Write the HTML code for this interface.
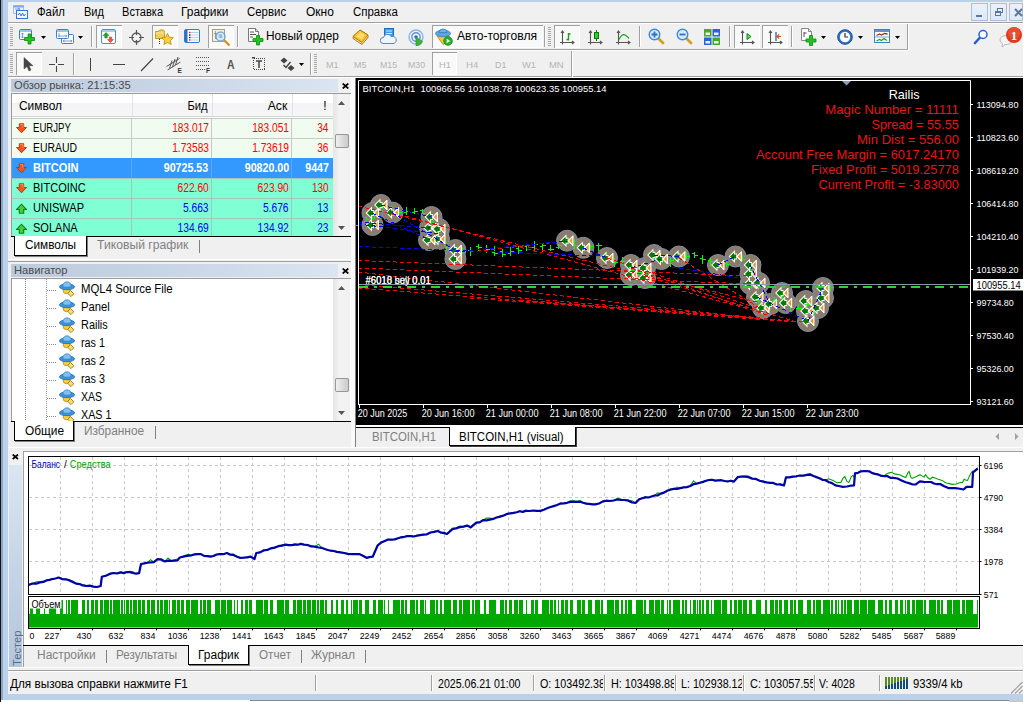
<!DOCTYPE html>
<html><head><meta charset="utf-8"><title>MetaTrader 4</title>
<style>
html,body{margin:0;padding:0;background:#fff;}
body{width:1036px;height:702px;position:relative;overflow:hidden;font-family:"Liberation Sans",sans-serif;}
.r{position:absolute;display:block;}
.t{position:absolute;white-space:nowrap;transform-origin:0 0;}
svg text{white-space:pre;}
</style></head><body>
<div class="r" style="left:0px;top:0px;width:1036px;height:702px;background:#fff;"></div>
<div class="r" style="left:0px;top:0px;width:1023px;height:700px;background:#b9d1ea;"></div>
<div class="r" style="left:0px;top:0px;width:1px;height:702px;background:#111;"></div>
<div class="r" style="left:1px;top:0px;width:2px;height:700px;background:#8fa6c4;"></div>
<div class="r" style="left:8px;top:2px;width:1015px;height:692px;background:#f0f0f0;"></div>
<div class="r" style="left:250px;top:700px;width:760px;height:1px;background:#8a8a8a;"></div>
<div class="r" style="left:1009px;top:700px;width:14px;height:2px;background:#c8c8c8;"></div>
<div class="r" style="left:8px;top:22px;width:1015px;height:1px;background:#a0a0a0;"></div>
<div class="r" style="left:8px;top:23px;width:1015px;height:1px;background:#fff;"></div>
<svg class="r" style="left:13px;top:4px" width="16" height="16" viewBox="0 0 16 16"><rect x="0.5" y="1.5" width="10" height="8" fill="#eaf2ff" stroke="#5a8be0" stroke-dasharray="1 1"/>
<rect x="0.5" y="1.5" width="10" height="2" fill="#7aa7ee"/>
<rect x="3.5" y="6.5" width="11" height="8" fill="#f4f8ff" stroke="#3a70d8"/>
<path d="M5 11l1.5-2 1.5 3 1.5-3 1.5 3 1.5-2" stroke="#3a70d8" fill="none" stroke-width="1"/>
<path d="M2 5h5M5 4l2 1-2 1" stroke="#5a8be0" fill="none" stroke-width="0.8"/></svg>
<span class="t" style="top:6.00px;font:12.5px/1 'Liberation Sans',sans-serif;color:#000;left:36.90px;transform:scaleX(0.9046);">Файл</span>
<span class="t" style="top:6.00px;font:12.5px/1 'Liberation Sans',sans-serif;color:#000;left:83.60px;transform:scaleX(0.8844);">Вид</span>
<span class="t" style="top:6.00px;font:12.5px/1 'Liberation Sans',sans-serif;color:#000;left:121.50px;transform:scaleX(0.8847);">Вставка</span>
<span class="t" style="top:6.00px;font:12.5px/1 'Liberation Sans',sans-serif;color:#000;left:181.20px;transform:scaleX(0.9539);">Графики</span>
<span class="t" style="top:6.00px;font:12.5px/1 'Liberation Sans',sans-serif;color:#000;left:247.20px;transform:scaleX(0.9135);">Сервис</span>
<span class="t" style="top:6.00px;font:12.5px/1 'Liberation Sans',sans-serif;color:#000;left:305.60px;transform:scaleX(0.9606);">Окно</span>
<span class="t" style="top:6.00px;font:12.5px/1 'Liberation Sans',sans-serif;color:#000;left:352.60px;transform:scaleX(0.9157);">Справка</span>
<div class="r" style="left:971px;top:3px;width:17px;height:18px;background:linear-gradient(#eaf1fb,#dce8f7);box-shadow:inset 0 0 0 1px #a9bfdc;"></div>
<div class="r" style="left:990px;top:3px;width:17px;height:18px;background:linear-gradient(#eaf1fb,#dce8f7);box-shadow:inset 0 0 0 1px #a9bfdc;"></div>
<div class="r" style="left:1009px;top:3px;width:14px;height:18px;background:linear-gradient(#eaf1fb,#dce8f7);box-shadow:inset 0 0 0 1px #a9bfdc;"></div>
<div class="r" style="left:976px;top:15px;width:6px;height:2px;background:#5d7797;"></div>
<svg class="r" style="left:994px;top:7px" width="10" height="10" viewBox="0 0 10 10"><rect x="3.5" y="1.5" width="5" height="4" fill="none" stroke="#5d7797" stroke-width="1"/><rect x="1.5" y="4.5" width="5" height="4" fill="#e3edf9" stroke="#5d7797" stroke-width="1"/><rect x="1" y="4" width="6" height="2" fill="#5d7797"/></svg>
<svg class="r" style="left:1014px;top:8px" width="9" height="9" viewBox="0 0 9 9"><path d="M1 1L8 8M8 1L1 8" stroke="#5d7797" stroke-width="2"/></svg>
<div class="r" style="left:8px;top:49px;width:900px;height:1px;background:#a0a0a0;"></div>
<div class="r" style="left:8px;top:50px;width:900px;height:1px;background:#fff;"></div>
<div class="r" style="left:907px;top:24px;width:1px;height:26px;background:#a0a0a0;"></div>
<div class="r" style="left:908px;top:24px;width:1px;height:27px;background:#fff;"></div>
<div class="r" style="left:10px;top:27px;width:3px;height:1px;background:#a8a8a8;"></div><div class="r" style="left:10px;top:29px;width:3px;height:1px;background:#a8a8a8;"></div><div class="r" style="left:10px;top:31px;width:3px;height:1px;background:#a8a8a8;"></div><div class="r" style="left:10px;top:33px;width:3px;height:1px;background:#a8a8a8;"></div><div class="r" style="left:10px;top:35px;width:3px;height:1px;background:#a8a8a8;"></div><div class="r" style="left:10px;top:37px;width:3px;height:1px;background:#a8a8a8;"></div><div class="r" style="left:10px;top:39px;width:3px;height:1px;background:#a8a8a8;"></div><div class="r" style="left:10px;top:41px;width:3px;height:1px;background:#a8a8a8;"></div><div class="r" style="left:10px;top:43px;width:3px;height:1px;background:#a8a8a8;"></div><div class="r" style="left:10px;top:45px;width:3px;height:1px;background:#a8a8a8;"></div>
<svg class="r" style="left:19px;top:28px" width="18" height="18" viewBox="0 0 18 18"><rect x="0.5" y="1.5" width="12" height="10" rx="1" fill="#fff" stroke="#3b7fc4"/><rect x="1" y="2" width="11" height="2" fill="#9cc3ea"/>
<path d="M3.5 5v5M2 6.5l1.500-1.500 1.500 1.500M2 8.500l1.500 1.500 1.500-1.500" stroke="#7a9cc0" fill="none"/>
<path d="M9 6h3v3.500h3.500v3h-3.500v3.500h-3v-3.500h-3.500v-3h3.500z" fill="#22c322" stroke="#0a8a0a" stroke-width="0.8"/></svg>
<svg class="r" style="left:41px;top:36px" width="5" height="3" viewBox="0 0 5 3"><path d="M0 0H5L2.5 3Z" fill="#000"/></svg>
<svg class="r" style="left:56px;top:28px" width="18" height="18" viewBox="0 0 18 18"><rect x="5.500" y="6.500" width="12" height="9" rx="1" fill="#fff" stroke="#3b7fc4"/>
<rect x="0.5" y="1.500" width="12" height="9" rx="1" fill="#fff" stroke="#3b7fc4"/><rect x="1" y="2" width="11" height="2" fill="#9cc3ea"/>
<path d="M3 5v4M2 8h9M9.500 7l1.500 1-1.500 1M7 13h9M14.500 12l1.500 1-1.500 1M8.500 12l-1.500 1 1.500 1" stroke="#6d93bd" fill="none" stroke-width="0.9"/></svg>
<svg class="r" style="left:78px;top:36px" width="5" height="3" viewBox="0 0 5 3"><path d="M0 0H5L2.5 3Z" fill="#000"/></svg>
<div class="r" style="left:91px;top:26px;width:1px;height:21px;background:#a0a0a0;"></div><div class="r" style="left:92px;top:26px;width:1px;height:21px;background:#fff;"></div>
<div class="r" style="left:96px;top:25px;width:26px;height:23px;background:#f9f9f9;box-shadow:inset 1px 1px 0 #a0a0a0,inset -1px -1px 0 #fff;"></div>
<svg class="r" style="left:101px;top:29px" width="16" height="16" viewBox="0 0 16 16"><rect x="0.5" y="0.5" width="14" height="14" rx="1.500" fill="#fff" stroke="#4a90d9"/><rect x="1" y="1" width="13" height="2" fill="#a8cdf0"/>
<path d="M5 3.500l3 3h-1.800v2.500h-2.400v-2.500h-1.800z" fill="#1fa81f" stroke="#0b7a0b" stroke-width="0.5"/>
<path d="M9.500 13.500l3-3h-1.800v-2.500h-2.400v2.500h-1.800z" fill="#f0582a" stroke="#c03a10" stroke-width="0.5"/></svg>
<svg class="r" style="left:129px;top:30px" width="15" height="15" viewBox="0 0 15 15"><circle cx="7.500" cy="7.500" r="4.500" fill="none" stroke="#555" stroke-width="1.300"/><path d="M7.500 0v5M7.500 10v5M0 7.500h5M10 7.500h5" stroke="#555" stroke-width="1.200"/></svg>
<div class="r" style="left:152px;top:25px;width:26px;height:23px;background:#f9f9f9;box-shadow:inset 1px 1px 0 #a0a0a0,inset -1px -1px 0 #fff;"></div>
<svg class="r" style="left:155px;top:28px" width="19" height="18" viewBox="0 0 19 18"><path d="M0.500 3.500h3l1-1.500h4l1 1.500v7h-9z" fill="#f3cf5a" stroke="#c79a1c"/><path d="M0.500 5h9" stroke="#fbe9a0"/>
<path d="M4.500 11v6" stroke="#333" stroke-dasharray="1 1"/>
<path d="M12.500 5.500l1.800 3.700 4 .5-3 2.800.8 4-3.600-2-3.600 2 .8-4-3-2.800 4-.5z" fill="#f7d23c" stroke="#c28e10" stroke-width="0.9"/></svg>
<svg class="r" style="left:184px;top:29px" width="17" height="15" viewBox="0 0 17 15"><rect x="0.5" y="0.5" width="15" height="13" rx="1.500" fill="#fff" stroke="#2f7bd0"/><rect x="1" y="1" width="2.500" height="12" fill="#2f6fc8"/>
<path d="M5.500 3.500h9M5.500 6h9M5.500 8.500h9M5.500 11h9" stroke="#9ab4dc" stroke-width="0.7"/>
<rect x="5" y="2.800" width="1.400" height="1.400" fill="#e22"/><rect x="5" y="5.300" width="1.400" height="1.400" fill="#222"/><rect x="5" y="7.800" width="1.400" height="1.400" fill="#222"/><rect x="5" y="10.300" width="1.400" height="1.400" fill="#e22"/></svg>
<div class="r" style="left:208px;top:25px;width:26px;height:23px;background:#f9f9f9;box-shadow:inset 1px 1px 0 #a0a0a0,inset -1px -1px 0 #fff;"></div>
<svg class="r" style="left:212px;top:28px" width="19" height="19" viewBox="0 0 19 19"><rect x="0.5" y="1.500" width="12" height="12" fill="#f4efe0" stroke="#a99f80"/>
<path d="M3.500 3v8M6.500 4v6M2 5.500h3M5 6.500h3" stroke="#8b8b8b" stroke-width="0.8"/>
<path d="M12 12l5.500 5.500" stroke="#c8941c" stroke-width="2.200"/>
<circle cx="8.500" cy="8.500" r="4.500" fill="#cfe4f7" fill-opacity="0.85" stroke="#5b9bd8" stroke-width="1.200"/><path d="M7 6.500h3v3.500h-2.500z" fill="#9db3c6"/></svg>
<div class="r" style="left:237px;top:26px;width:1px;height:21px;background:#a0a0a0;"></div><div class="r" style="left:238px;top:26px;width:1px;height:21px;background:#fff;"></div>
<svg class="r" style="left:247px;top:28px" width="17" height="18" viewBox="0 0 17 18"><path d="M1.500 0.500h7l3 3v10h-10z" fill="#fff" stroke="#777"/><path d="M8.500 0.500v3h3" fill="#ddd" stroke="#777"/>
<path d="M3 4h4M3 6.500h6M3 9h3" stroke="#555" stroke-width="1"/>
<path d="M9.500 7.500h3v3h3.500v3h-3.500v3.500h-3v-3.500h-3.500v-3h3.500z" fill="#22c322" stroke="#0a8a0a" stroke-width="0.8"/></svg>
<span class="t" style="top:30.00px;font:12.5px/1 'Liberation Sans',sans-serif;color:#000;left:266.40px;transform:scaleX(0.9471);">Новый ордер</span>
<svg class="r" style="left:352px;top:29px" width="17" height="16" viewBox="0 0 17 16"><path d="M1 7.500L8 1l8 5v2.500L10 15.500 1 9.500z" fill="#c98a10" stroke="#a06a00" stroke-width="0.800"/><path d="M1 7.500L8 1l8 5-6 7.500z" fill="#f2c233" stroke="#b07808" stroke-width="0.800"/><path d="M4 7.200l4.500-4 4.500 3-3.500 4.300z" fill="#f9dc6a"/><path d="M1.500 9l8.500 5.500 5.500-7" stroke="#fff3c0" stroke-width="0.800" fill="none"/></svg>
<svg class="r" style="left:380px;top:28px" width="17" height="18" viewBox="0 0 17 18"><rect x="4.500" y="0.500" width="9" height="9" fill="#3f9be8" stroke="#1f6fc0"/><path d="M6 3h6M6 5.500h6" stroke="#cfe6fb" stroke-width="1.200"/>
<path d="M3 15.500a3 3 0 0 1 .5-6 4 4 0 0 1 7.500-1 3.500 3.500 0 0 1 3 7z" fill="#eef4fb" stroke="#5a86c2"/></svg>
<svg class="r" style="left:408px;top:29px" width="17" height="17" viewBox="0 0 17 17"><circle cx="8" cy="8" r="7" fill="none" stroke="#8fb4e8" stroke-width="1.400"/><circle cx="8" cy="8" r="4.200" fill="none" stroke="#5e92dd" stroke-width="1.400"/><circle cx="8" cy="8" r="1.800" fill="#2f6fd0"/>
<path d="M8 8v8.500h2.500a7 7 0 0 0 4-4z" fill="#3cb43c" stroke="#1d8a1d" stroke-width="0.6"/></svg>
<div class="r" style="left:432px;top:25px;width:111px;height:23px;background:#f9f9f9;box-shadow:inset 1px 1px 0 #a0a0a0,inset -1px -1px 0 #fff;"></div>
<svg class="r" style="left:435px;top:28px" width="18" height="18" viewBox="0 0 18 18"><path d="M2 8l6 8.500 8-4-3-6z" fill="#f2c838" stroke="#b88a10" stroke-width="0.8"/>
<ellipse cx="8" cy="5.500" rx="7.500" ry="3.300" fill="#5aa7e0" stroke="#2e7fc0" stroke-width="0.8"/><path d="M4 4.500a4 3.500 0 0 1 8 0z" fill="#6db6ea" stroke="#2e7fc0" stroke-width="0.8"/>
<circle cx="13" cy="13" r="4.300" fill="#22b422" stroke="#0d7f0d" stroke-width="0.7"/><path d="M11.700 10.800l3.600 2.200-3.600 2.200z" fill="#fff"/></svg>
<span class="t" style="top:30.00px;font:12.5px/1 'Liberation Sans',sans-serif;color:#000;left:456.70px;transform:scaleX(0.9693);">Авто-торговля</span>
<div class="r" style="left:544px;top:26px;width:1px;height:21px;background:#a0a0a0;"></div><div class="r" style="left:545px;top:26px;width:1px;height:21px;background:#fff;"></div>
<div class="r" style="left:548px;top:27px;width:3px;height:1px;background:#a8a8a8;"></div><div class="r" style="left:548px;top:29px;width:3px;height:1px;background:#a8a8a8;"></div><div class="r" style="left:548px;top:31px;width:3px;height:1px;background:#a8a8a8;"></div><div class="r" style="left:548px;top:33px;width:3px;height:1px;background:#a8a8a8;"></div><div class="r" style="left:548px;top:35px;width:3px;height:1px;background:#a8a8a8;"></div><div class="r" style="left:548px;top:37px;width:3px;height:1px;background:#a8a8a8;"></div><div class="r" style="left:548px;top:39px;width:3px;height:1px;background:#a8a8a8;"></div><div class="r" style="left:548px;top:41px;width:3px;height:1px;background:#a8a8a8;"></div><div class="r" style="left:548px;top:43px;width:3px;height:1px;background:#a8a8a8;"></div><div class="r" style="left:548px;top:45px;width:3px;height:1px;background:#a8a8a8;"></div>
<div class="r" style="left:554px;top:25px;width:26px;height:23px;background:#f9f9f9;box-shadow:inset 1px 1px 0 #a0a0a0,inset -1px -1px 0 #fff;"></div>
<svg class="r" style="left:560px;top:30px" width="15" height="16" viewBox="0 0 15 16"><path d="M2.500 1.500v13M0 12.500h13.500M1 3l1.500-2 1.500 2M12 11l2 1.500-2 1.500" stroke="#555" stroke-width="1.100" fill="none"/><path d="M8.500 3v7.500M8.500 4h2M6.500 9.500h2" stroke="#18a018" stroke-width="1.400" fill="none"/></svg>
<svg class="r" style="left:588px;top:30px" width="15" height="16" viewBox="0 0 15 16"><path d="M2.500 1.500v13M0 12.500h13.500M1 3l1.500-2 1.500 2M12 11l2 1.500-2 1.500" stroke="#555" stroke-width="1.100" fill="none"/><path d="M8.500 0v11" stroke="#0a7a0a" stroke-width="1"/><rect x="6.500" y="2.500" width="4" height="6" fill="#28d028" stroke="#0a7a0a"/></svg>
<svg class="r" style="left:616px;top:30px" width="15" height="16" viewBox="0 0 15 16"><path d="M2.500 1.500v13M0 12.500h13.500M1 3l1.500-2 1.500 2M12 11l2 1.500-2 1.500" stroke="#555" stroke-width="1.100" fill="none"/><path d="M3 9.500c2-4 4-5.500 6-4.500s3 2.500 4 3.500" stroke="#18a018" stroke-width="1.200" fill="none"/></svg>
<div class="r" style="left:639px;top:26px;width:1px;height:21px;background:#a0a0a0;"></div><div class="r" style="left:640px;top:26px;width:1px;height:21px;background:#fff;"></div>
<svg class="r" style="left:648px;top:28px" width="17" height="17" viewBox="0 0 17 17"><path d="M10 10l5 5" stroke="#d0a020" stroke-width="2.800" stroke-linecap="round"/><circle cx="6.500" cy="6.500" r="5.300" fill="#d6e9fa" stroke="#3e8ad8" stroke-width="1.400"/><path d="M3.500 6.500h6M6.500 3.500v6" stroke="#2a70c0" stroke-width="1.800"/></svg>
<svg class="r" style="left:676px;top:28px" width="17" height="17" viewBox="0 0 17 17"><path d="M10 10l5 5" stroke="#d0a020" stroke-width="2.800" stroke-linecap="round"/><circle cx="6.500" cy="6.500" r="5.300" fill="#d6e9fa" stroke="#3e8ad8" stroke-width="1.400"/><path d="M3.500 6.500h6" stroke="#2a70c0" stroke-width="1.800"/></svg>
<svg class="r" style="left:704px;top:29px" width="16" height="16" viewBox="0 0 16 16"><rect x="0" y="0" width="7.500" height="7.500" fill="#4aa828"/><rect x="8.500" y="0" width="7.500" height="7.500" fill="#2a62d8"/><rect x="0" y="8.500" width="7.500" height="7.500" fill="#2a62d8"/><rect x="8.500" y="8.500" width="7.500" height="7.500" fill="#4aa828"/>
<path d="M1.500 3.500h4.500v2.500h-4.500zM10 3.500h4.500v2.500h-4.500zM1.500 12h4.500v2.500h-4.500zM10 12h4.500v2.500h-4.500z" fill="#fff" fill-opacity="0.9"/></svg>
<div class="r" style="left:729px;top:26px;width:1px;height:21px;background:#a0a0a0;"></div><div class="r" style="left:730px;top:26px;width:1px;height:21px;background:#fff;"></div>
<div class="r" style="left:734px;top:25px;width:26px;height:23px;background:#f9f9f9;box-shadow:inset 1px 1px 0 #a0a0a0,inset -1px -1px 0 #fff;"></div>
<svg class="r" style="left:740px;top:30px" width="15" height="16" viewBox="0 0 15 16"><path d="M2.500 1.500v13M0 12.500h13.500M1 3l1.500-2 1.500 2M12 11l2 1.500-2 1.500" stroke="#555" stroke-width="1.100" fill="none"/><path d="M7 3.500l4 3-4 3z" fill="#5ae05a" stroke="#0d8a0d"/></svg>
<div class="r" style="left:762px;top:25px;width:26px;height:23px;background:#f9f9f9;box-shadow:inset 1px 1px 0 #a0a0a0,inset -1px -1px 0 #fff;"></div>
<svg class="r" style="left:768px;top:30px" width="15" height="16" viewBox="0 0 15 16"><path d="M2.500 1.500v13M0 12.500h13.500M1 3l1.500-2 1.500 2M12 11l2 1.500-2 1.500" stroke="#555" stroke-width="1.100" fill="none"/><path d="M8 2v9" stroke="#2a62a8" stroke-width="1.300"/><path d="M13 6.500h-3.500M11 4.500l-2 2 2 2" stroke="#e05010" stroke-width="1.200" fill="none"/></svg>
<div class="r" style="left:791px;top:26px;width:1px;height:21px;background:#a0a0a0;"></div><div class="r" style="left:792px;top:26px;width:1px;height:21px;background:#fff;"></div>
<svg class="r" style="left:801px;top:28px" width="17" height="19" viewBox="0 0 17 19"><path d="M0.500 0.500h7l3 3v9h-10z" fill="#fff" stroke="#888"/><path d="M7.500 0.500v3h3" fill="#ddd" stroke="#888"/><path d="M3 4v5M3 5h2.500" stroke="#555"/>
<path d="M8.500 7.500h3v3.500h3.500v3h-3.500v3.500h-3v-3.500h-3.500v-3h3.500z" fill="#22c322" stroke="#0a8a0a" stroke-width="0.8"/></svg>
<svg class="r" style="left:821px;top:36px" width="5" height="3" viewBox="0 0 5 3"><path d="M0 0H5L2.5 3Z" fill="#000"/></svg>
<svg class="r" style="left:837px;top:29px" width="17" height="17" viewBox="0 0 17 17"><circle cx="8" cy="8" r="7.300" fill="#2a72c8" stroke="#1a4f98"/><circle cx="8" cy="8" r="5.200" fill="#fff"/><path d="M8 4v4h3" stroke="#333" stroke-width="1.200" fill="none"/></svg>
<svg class="r" style="left:858px;top:36px" width="5" height="3" viewBox="0 0 5 3"><path d="M0 0H5L2.5 3Z" fill="#000"/></svg>
<svg class="r" style="left:874px;top:29px" width="17" height="15" viewBox="0 0 17 15"><rect x="0.500" y="0.500" width="15" height="13" fill="#fff" stroke="#3b7fc4"/><rect x="1" y="1" width="14" height="2" fill="#5a94d8"/><path d="M1 8h14" stroke="#3b7fc4" stroke-width="0.700"/>
<path d="M2.500 6.500l3-1.500 2 1 3-1.500 3 .5" stroke="#a03018" stroke-width="1.300" fill="none"/><path d="M2.500 12l3-1.500 2 1 2.500-2 3 2" stroke="#18a018" stroke-width="1.300" fill="none"/></svg>
<svg class="r" style="left:895px;top:36px" width="5" height="3" viewBox="0 0 5 3"><path d="M0 0H5L2.5 3Z" fill="#000"/></svg>
<svg class="r" style="left:973px;top:29px" width="16" height="16" viewBox="0 0 16 16"><path d="M2 14l5-5.500" stroke="#2a5fd0" stroke-width="2.600" stroke-linecap="round"/><circle cx="10" cy="5.500" r="4" fill="#fff" stroke="#2a5fd0" stroke-width="1.500"/></svg>
<svg class="r" style="left:998px;top:26px" width="25" height="22" viewBox="0 0 25 22"><path d="M2 14a6 4.500 0 1 1 5 4.500l-3 2.500.5-3.500a5 4 0 0 1-2.500-3.500z" fill="#f4f4f4" stroke="#b8b8b8"/>
<circle cx="16" cy="9" r="8" fill="#e03a1c"/><circle cx="16" cy="7" r="6" fill="#f06a4a" fill-opacity="0.450"/>
<text x="16" y="13.500" font-family="Liberation Serif,serif" font-weight="bold" font-size="13" fill="#fff" text-anchor="middle">1</text></svg>
<div class="r" style="left:8px;top:76px;width:1015px;height:1px;background:#a0a0a0;"></div>
<div class="r" style="left:8px;top:77px;width:1015px;height:1px;background:#fff;"></div>
<div class="r" style="left:571px;top:51px;width:1px;height:26px;background:#a0a0a0;"></div>
<div class="r" style="left:572px;top:51px;width:1px;height:26px;background:#fff;"></div>
<div class="r" style="left:10px;top:54px;width:3px;height:1px;background:#a8a8a8;"></div><div class="r" style="left:10px;top:56px;width:3px;height:1px;background:#a8a8a8;"></div><div class="r" style="left:10px;top:58px;width:3px;height:1px;background:#a8a8a8;"></div><div class="r" style="left:10px;top:60px;width:3px;height:1px;background:#a8a8a8;"></div><div class="r" style="left:10px;top:62px;width:3px;height:1px;background:#a8a8a8;"></div><div class="r" style="left:10px;top:64px;width:3px;height:1px;background:#a8a8a8;"></div><div class="r" style="left:10px;top:66px;width:3px;height:1px;background:#a8a8a8;"></div><div class="r" style="left:10px;top:68px;width:3px;height:1px;background:#a8a8a8;"></div><div class="r" style="left:10px;top:70px;width:3px;height:1px;background:#a8a8a8;"></div><div class="r" style="left:10px;top:72px;width:3px;height:1px;background:#a8a8a8;"></div>
<div class="r" style="left:16px;top:52px;width:26px;height:23px;background:#f9f9f9;box-shadow:inset 1px 1px 0 #a0a0a0,inset -1px -1px 0 #fff;"></div>
<svg class="r" style="left:23px;top:57px" width="10" height="15" viewBox="0 0 10 15"><path d="M1 0.500v11.500l3-2.500 2 4.500 2-1-2-4.300h4z" fill="#444" stroke="#444" stroke-width="0.500"/></svg>
<svg class="r" style="left:49px;top:57px" width="15" height="15" viewBox="0 0 15 15"><path d="M7.500 0v6M7.500 9v6M0 7.500h6M9 7.500h6" stroke="#444" stroke-width="1.100"/></svg>
<div class="r" style="left:73px;top:53px;width:1px;height:22px;background:#a0a0a0;"></div><div class="r" style="left:74px;top:53px;width:1px;height:22px;background:#fff;"></div>
<div class="r" style="left:90px;top:58px;width:1px;height:13px;background:#444;"></div>
<div class="r" style="left:113px;top:64px;width:12px;height:1px;background:#444;"></div>
<svg class="r" style="left:140px;top:57px" width="14" height="15" viewBox="0 0 14 15"><path d="M1 14L13 1.500" stroke="#444" stroke-width="1.200"/></svg>
<svg class="r" style="left:166px;top:56px" width="18" height="18" viewBox="0 0 18 18"><path d="M0.500 10.500L13.500 2.500M1.500 14L14.500 6M3.500 12.500l2.500-8M6.500 11l2.500-8M9.500 9l2.500-8" stroke="#555" stroke-width="1" fill="none"/>
<text x="11.500" y="16.800" font-family="Liberation Sans,sans-serif" font-weight="bold" font-size="6.500" fill="#333">E</text></svg>
<svg class="r" style="left:195px;top:56px" width="18" height="18" viewBox="0 0 18 18"><path d="M1 1.500h13M1 5.500h13M1 9.500h13M1 13.500h9" stroke="#555" stroke-width="1" stroke-dasharray="1 1" shape-rendering="crispEdges"/>
<text x="11" y="16.800" font-family="Liberation Sans,sans-serif" font-weight="bold" font-size="6.500" fill="#333">F</text></svg>
<span class="t" style="top:59.00px;font:bold 12px/1 'Liberation Sans',sans-serif;color:#555;left:226.80px;transform:scaleX(0.8770);">A</span>
<svg class="r" style="left:252px;top:57px" width="14" height="14" viewBox="0 0 14 14"><rect x="1.500" y="1.500" width="11" height="11" fill="none" stroke="#444" stroke-dasharray="1 1" shape-rendering="crispEdges"/><path d="M4 4h6M7 4v7" stroke="#444" stroke-width="1.500"/><rect x="0" y="0" width="3" height="1.500" fill="#444"/></svg>
<svg class="r" style="left:280px;top:57px" width="15" height="15" viewBox="0 0 15 15"><path d="M4 0.500l3.500 3-3.500 3-3.500-3zM11 8l3.500 3-3.500 3-3.500-3z" fill="#444"/><path d="M3.500 8l2.500 2.500 4.500-5.500" stroke="#444" stroke-width="1.400" fill="none"/></svg>
<svg class="r" style="left:299px;top:63px" width="5" height="3" viewBox="0 0 5 3"><path d="M0 0H5L2.5 3Z" fill="#000"/></svg>
<div class="r" style="left:310px;top:53px;width:1px;height:22px;background:#a0a0a0;"></div><div class="r" style="left:311px;top:53px;width:1px;height:22px;background:#fff;"></div>
<div class="r" style="left:314px;top:54px;width:3px;height:1px;background:#a8a8a8;"></div><div class="r" style="left:314px;top:56px;width:3px;height:1px;background:#a8a8a8;"></div><div class="r" style="left:314px;top:58px;width:3px;height:1px;background:#a8a8a8;"></div><div class="r" style="left:314px;top:60px;width:3px;height:1px;background:#a8a8a8;"></div><div class="r" style="left:314px;top:62px;width:3px;height:1px;background:#a8a8a8;"></div><div class="r" style="left:314px;top:64px;width:3px;height:1px;background:#a8a8a8;"></div><div class="r" style="left:314px;top:66px;width:3px;height:1px;background:#a8a8a8;"></div><div class="r" style="left:314px;top:68px;width:3px;height:1px;background:#a8a8a8;"></div><div class="r" style="left:314px;top:70px;width:3px;height:1px;background:#a8a8a8;"></div><div class="r" style="left:314px;top:72px;width:3px;height:1px;background:#a8a8a8;"></div>
<div class="r" style="left:432px;top:52px;width:25px;height:23px;background:#f9f9f9;box-shadow:inset 1px 1px 0 #a0a0a0,inset -1px -1px 0 #fff;"></div>
<span class="t" style="top:60.00px;font:9.5px/1 'Liberation Sans',sans-serif;color:#b4b4b4;left:325.70px;transform:scaleX(0.9548);">M1</span>
<span class="t" style="top:60.00px;font:9.5px/1 'Liberation Sans',sans-serif;color:#b4b4b4;left:353.60px;transform:scaleX(0.9397);">M5</span>
<span class="t" style="top:60.00px;font:9.5px/1 'Liberation Sans',sans-serif;color:#b4b4b4;left:379.70px;transform:scaleX(0.9308);">M15</span>
<span class="t" style="top:60.00px;font:9.5px/1 'Liberation Sans',sans-serif;color:#b4b4b4;left:407.60px;transform:scaleX(0.9254);">M30</span>
<span class="t" style="top:60.00px;font:9.5px/1 'Liberation Sans',sans-serif;color:#b4b4b4;left:438.60px;transform:scaleX(0.9717);">H1</span>
<span class="t" style="top:60.00px;font:9.5px/1 'Liberation Sans',sans-serif;color:#b4b4b4;left:465.70px;transform:scaleX(1.0129);">H4</span>
<span class="t" style="top:60.00px;font:9.5px/1 'Liberation Sans',sans-serif;color:#b4b4b4;left:494.70px;transform:scaleX(0.9305);">D1</span>
<span class="t" style="top:60.00px;font:9.5px/1 'Liberation Sans',sans-serif;color:#b4b4b4;left:522.00px;transform:scaleX(0.9825);">W1</span>
<span class="t" style="top:60.00px;font:9.5px/1 'Liberation Sans',sans-serif;color:#b4b4b4;left:548.60px;transform:scaleX(0.9950);">MN</span>
<div class="r" style="left:11px;top:79px;width:327px;height:13px;background:linear-gradient(90deg,#bccadc,#c9d6e6 50%,#dbe5f1);"></div>
<span class="t" style="top:80.00px;font:10.5px/1 'Liberation Sans',sans-serif;color:#4a4a4a;left:13.60px;transform:scaleX(1.0629);">Обзор рынка: 21:15:35</span>
<svg class="r" style="left:342px;top:82.5px" width="7" height="6" viewBox="0 0 7 6"><path d="M0.700 0.500L6.300 5.500M6.300 0.500L0.700 5.500" stroke="#000" stroke-width="1.700"/></svg>
<div class="r" style="left:11px;top:93px;width:340px;height:143px;background:#fff;box-shadow:inset 1px 1px 0 #9a9a9a;"></div>
<div class="r" style="left:12px;top:94px;width:321px;height:22px;background:linear-gradient(#fff 42%,#f3f3f5 43%,#f7f7f8);"></div>
<div class="r" style="left:12px;top:116px;width:321px;height:1px;background:#d5d5d5;"></div>
<div class="r" style="left:12px;top:117px;width:321px;height:1px;background:#fff;"></div>
<div class="r" style="left:132px;top:94px;width:1px;height:23px;background:#e2e2e2;"></div>
<div class="r" style="left:212px;top:94px;width:1px;height:23px;background:#e2e2e2;"></div>
<div class="r" style="left:292px;top:94px;width:1px;height:23px;background:#e2e2e2;"></div>
<span class="t" style="top:100.00px;font:12px/1 'Liberation Sans',sans-serif;color:#000;left:18.60px;transform:scaleX(0.9938);">Символ</span>
<span class="t" style="top:100.00px;font:12px/1 'Liberation Sans',sans-serif;color:#000;right:828.20px;transform-origin:100% 0;transform:scaleX(0.9361);">Бид</span>
<span class="t" style="top:100.00px;font:12px/1 'Liberation Sans',sans-serif;color:#000;right:749.00px;transform-origin:100% 0;transform:scaleX(1.0128);">Аск</span>
<span class="t" style="top:100.00px;font:12px/1 'Liberation Sans',sans-serif;color:#000;right:709.50px;transform-origin:100% 0;">!</span>
<div class="r" style="left:12px;top:118px;width:321px;height:20px;background:#f0fcf0;"></div>
<div class="r" style="left:12px;top:118px;width:321px;height:1px;background:#c8c8c8;"></div>
<div class="r" style="left:131px;top:118px;width:1px;height:20px;background:#c8c8c8;"></div>
<div class="r" style="left:211px;top:118px;width:1px;height:20px;background:#c8c8c8;"></div>
<div class="r" style="left:291px;top:118px;width:1px;height:20px;background:#c8c8c8;"></div>
<svg class="r" style="left:16px;top:123px" width="11" height="11" viewBox="0 0 11 11"><path d="M3.300 0.700h4.400v3.800h2.800l-5 5.300-5-5.300h2.800z" fill="#f2561e" stroke="#b83208" stroke-width="0.900"/><path d="M4 1.400h3v3.500" stroke="#ff9a6a" stroke-width="0.800" fill="none"/></svg>
<span class="t" style="top:122.00px;font:12px/1 'Liberation Sans',sans-serif;color:#000;left:32.50px;transform:scaleX(0.7984);">EURJPY</span>
<span class="t" style="top:121.00px;font:13px/1 'Liberation Sans',sans-serif;color:#f00;right:827.30px;transform-origin:100% 0;transform:scaleX(0.7832);">183.017</span>
<span class="t" style="top:121.00px;font:13px/1 'Liberation Sans',sans-serif;color:#f00;right:747.10px;transform-origin:100% 0;transform:scaleX(0.7832);">183.051</span>
<span class="t" style="top:121.00px;font:13px/1 'Liberation Sans',sans-serif;color:#f00;right:707.10px;transform-origin:100% 0;transform:scaleX(0.7746);">34</span>
<div class="r" style="left:12px;top:138px;width:321px;height:20px;background:#f0fcf0;"></div>
<div class="r" style="left:12px;top:138px;width:321px;height:1px;background:#c8c8c8;"></div>
<div class="r" style="left:131px;top:138px;width:1px;height:20px;background:#c8c8c8;"></div>
<div class="r" style="left:211px;top:138px;width:1px;height:20px;background:#c8c8c8;"></div>
<div class="r" style="left:291px;top:138px;width:1px;height:20px;background:#c8c8c8;"></div>
<svg class="r" style="left:16px;top:143px" width="11" height="11" viewBox="0 0 11 11"><path d="M3.300 0.700h4.400v3.800h2.800l-5 5.300-5-5.300h2.800z" fill="#f2561e" stroke="#b83208" stroke-width="0.900"/><path d="M4 1.400h3v3.500" stroke="#ff9a6a" stroke-width="0.800" fill="none"/></svg>
<span class="t" style="top:142.00px;font:12px/1 'Liberation Sans',sans-serif;color:#000;left:32.50px;transform:scaleX(0.8663);">EURAUD</span>
<span class="t" style="top:141.00px;font:13px/1 'Liberation Sans',sans-serif;color:#f00;right:827.30px;transform-origin:100% 0;transform:scaleX(0.7832);">1.73583</span>
<span class="t" style="top:141.00px;font:13px/1 'Liberation Sans',sans-serif;color:#f00;right:747.10px;transform-origin:100% 0;transform:scaleX(0.7832);">1.73619</span>
<span class="t" style="top:141.00px;font:13px/1 'Liberation Sans',sans-serif;color:#f00;right:707.10px;transform-origin:100% 0;transform:scaleX(0.7746);">36</span>
<div class="r" style="left:12px;top:158px;width:321px;height:20px;background:#3399ff;"></div>
<div class="r" style="left:131px;top:158px;width:1px;height:20px;background:#5aa8f8;"></div>
<div class="r" style="left:211px;top:158px;width:1px;height:20px;background:#5aa8f8;"></div>
<div class="r" style="left:291px;top:158px;width:1px;height:20px;background:#5aa8f8;"></div>
<svg class="r" style="left:16px;top:163px" width="11" height="11" viewBox="0 0 11 11"><path d="M3.300 0.700h4.400v3.800h2.800l-5 5.300-5-5.300h2.800z" fill="#f2561e" stroke="#b83208" stroke-width="0.900"/><path d="M4 1.400h3v3.500" stroke="#ff9a6a" stroke-width="0.800" fill="none"/></svg>
<span class="t" style="top:162.00px;font:bold 12px/1 'Liberation Sans',sans-serif;color:#fff;left:32.50px;transform:scaleX(0.9224);">BITCOIN</span>
<span class="t" style="top:161.00px;font:bold 13px/1 'Liberation Sans',sans-serif;color:#fff;right:827.30px;transform-origin:100% 0;transform:scaleX(0.8208);">90725.53</span>
<span class="t" style="top:161.00px;font:bold 13px/1 'Liberation Sans',sans-serif;color:#fff;right:747.10px;transform-origin:100% 0;transform:scaleX(0.8208);">90820.00</span>
<span class="t" style="top:161.00px;font:bold 13px/1 'Liberation Sans',sans-serif;color:#fff;right:707.10px;transform-origin:100% 0;transform:scaleX(0.8161);">9447</span>
<div class="r" style="left:12px;top:178px;width:321px;height:20px;background:#7fffd4;"></div>
<div class="r" style="left:12px;top:178px;width:321px;height:1px;background:#a4c6bc;"></div>
<div class="r" style="left:131px;top:178px;width:1px;height:20px;background:#a4c6bc;"></div>
<div class="r" style="left:211px;top:178px;width:1px;height:20px;background:#a4c6bc;"></div>
<div class="r" style="left:291px;top:178px;width:1px;height:20px;background:#a4c6bc;"></div>
<svg class="r" style="left:16px;top:183px" width="11" height="11" viewBox="0 0 11 11"><path d="M3.300 0.700h4.400v3.800h2.800l-5 5.300-5-5.300h2.800z" fill="#f2561e" stroke="#b83208" stroke-width="0.900"/><path d="M4 1.400h3v3.500" stroke="#ff9a6a" stroke-width="0.800" fill="none"/></svg>
<span class="t" style="top:182.00px;font:12px/1 'Liberation Sans',sans-serif;color:#000;left:32.50px;transform:scaleX(0.9192);">BITCOINC</span>
<span class="t" style="top:181.00px;font:13px/1 'Liberation Sans',sans-serif;color:#f00;right:827.30px;transform-origin:100% 0;transform:scaleX(0.7848);">622.60</span>
<span class="t" style="top:181.00px;font:13px/1 'Liberation Sans',sans-serif;color:#f00;right:747.10px;transform-origin:100% 0;transform:scaleX(0.7848);">623.90</span>
<span class="t" style="top:181.00px;font:13px/1 'Liberation Sans',sans-serif;color:#f00;right:707.10px;transform-origin:100% 0;transform:scaleX(0.7746);">130</span>
<div class="r" style="left:12px;top:198px;width:321px;height:20px;background:#7fffd4;"></div>
<div class="r" style="left:12px;top:198px;width:321px;height:1px;background:#a4c6bc;"></div>
<div class="r" style="left:131px;top:198px;width:1px;height:20px;background:#a4c6bc;"></div>
<div class="r" style="left:211px;top:198px;width:1px;height:20px;background:#a4c6bc;"></div>
<div class="r" style="left:291px;top:198px;width:1px;height:20px;background:#a4c6bc;"></div>
<svg class="r" style="left:16px;top:203px" width="11" height="11" viewBox="0 0 11 11"><path d="M3.300 10.300h4.400v-3.800h2.800l-5-5.300-5 5.300h2.800z" fill="#46cc46" stroke="#0d7f0d" stroke-width="1.100"/></svg>
<span class="t" style="top:202.00px;font:12px/1 'Liberation Sans',sans-serif;color:#000;left:32.50px;transform:scaleX(0.9197);">UNISWAP</span>
<span class="t" style="top:201.00px;font:13px/1 'Liberation Sans',sans-serif;color:#00f;right:827.30px;transform-origin:100% 0;transform:scaleX(0.7870);">5.663</span>
<span class="t" style="top:201.00px;font:13px/1 'Liberation Sans',sans-serif;color:#00f;right:747.10px;transform-origin:100% 0;transform:scaleX(0.7870);">5.676</span>
<span class="t" style="top:201.00px;font:13px/1 'Liberation Sans',sans-serif;color:#00f;right:707.10px;transform-origin:100% 0;transform:scaleX(0.7746);">13</span>
<div class="r" style="left:12px;top:218px;width:321px;height:18px;background:#7fffd4;"></div>
<div class="r" style="left:12px;top:218px;width:321px;height:1px;background:#a4c6bc;"></div>
<div class="r" style="left:131px;top:218px;width:1px;height:18px;background:#a4c6bc;"></div>
<div class="r" style="left:211px;top:218px;width:1px;height:18px;background:#a4c6bc;"></div>
<div class="r" style="left:291px;top:218px;width:1px;height:18px;background:#a4c6bc;"></div>
<svg class="r" style="left:16px;top:223px" width="11" height="11" viewBox="0 0 11 11"><path d="M3.300 10.300h4.400v-3.800h2.800l-5-5.300-5 5.300h2.800z" fill="#46cc46" stroke="#0d7f0d" stroke-width="1.100"/></svg>
<span class="t" style="top:222.00px;font:12px/1 'Liberation Sans',sans-serif;color:#000;left:32.50px;transform:scaleX(0.9181);">SOLANA</span>
<span class="t" style="top:221.00px;font:13px/1 'Liberation Sans',sans-serif;color:#00f;right:827.30px;transform-origin:100% 0;transform:scaleX(0.7848);">134.69</span>
<span class="t" style="top:221.00px;font:13px/1 'Liberation Sans',sans-serif;color:#00f;right:747.10px;transform-origin:100% 0;transform:scaleX(0.7848);">134.92</span>
<span class="t" style="top:221.00px;font:13px/1 'Liberation Sans',sans-serif;color:#00f;right:707.10px;transform-origin:100% 0;transform:scaleX(0.7746);">23</span>
<div class="r" style="left:333px;top:94px;width:17px;height:142px;background:linear-gradient(90deg,#e4e4e4,#f4f4f4 40%,#f0f0f0);"></div><svg class="r" style="left:338px;top:101px" width="7" height="4" viewBox="0 0 7 4"><path d="M0 4L3.500 0L7 4Z" fill="#555"/></svg><svg class="r" style="left:338px;top:226px" width="7" height="4" viewBox="0 0 7 4"><path d="M0 0L3.500 4L7 0Z" fill="#555"/></svg><div class="r" style="left:335px;top:134px;width:14px;height:14px;background:linear-gradient(90deg,#f4f4f4,#dcdcdc 50%,#c8c8c8);box-shadow:inset 0 0 0 1px #979797;border-radius:2px;"></div>
<div class="r" style="left:11px;top:236px;width:341px;height:1px;background:#000;"></div>
<div class="r" style="left:14px;top:236px;width:73px;height:20px;background:#fff;box-shadow:inset 1px 0 0 #000,inset -1px -1px 0 #000,1px 1px 0 #808080;"></div>
<span class="t" style="top:239.00px;font:12px/1 'Liberation Sans',sans-serif;color:#000;left:25.40px;transform:scaleX(0.9828);">Символы</span>
<span class="t" style="top:239.00px;font:12px/1 'Liberation Sans',sans-serif;color:#808080;left:97.30px;transform:scaleX(1.0139);">Тиковый график</span>
<div class="r" style="left:199px;top:240px;width:1px;height:13px;background:#808080;"></div>
<div class="r" style="left:8px;top:259px;width:346px;height:1px;background:#fff;"></div>
<div class="r" style="left:8px;top:261px;width:346px;height:1px;background:#a0a0a0;"></div>
<div class="r" style="left:11px;top:264px;width:327px;height:13px;background:linear-gradient(90deg,#bccadc,#c9d6e6 50%,#dbe5f1);"></div>
<span class="t" style="top:265.00px;font:10.5px/1 'Liberation Sans',sans-serif;color:#4a4a4a;left:13.60px;transform:scaleX(1.0607);">Навигатор</span>
<svg class="r" style="left:342px;top:267.5px" width="7" height="6" viewBox="0 0 7 6"><path d="M0.700 0.500L6.300 5.500M6.300 0.500L0.700 5.500" stroke="#000" stroke-width="1.700"/></svg>
<div class="r" style="left:11px;top:278px;width:340px;height:143px;background:#fff;box-shadow:inset 1px 1px 0 #9a9a9a;"></div>
<div class="r" style="left:25px;top:279px;width:1px;height:142px;background:repeating-linear-gradient(#888 0 1px,transparent 1px 2px);"></div>
<div class="r" style="left:46px;top:279px;width:1px;height:142px;background:repeating-linear-gradient(#999 0 1px,transparent 1px 2px);"></div>
<div class="r" style="left:47px;top:290px;width:10px;height:1px;background:repeating-linear-gradient(90deg,#888 0 1px,transparent 1px 2px);"></div>
<svg class="r" style="left:59px;top:281px" width="17" height="16" viewBox="0 0 17 16"><circle cx="7.500" cy="9.300" r="3.400" fill="#f4d040" stroke="#b08a10" stroke-width="0.800"/>
<path d="M11.500 9.500l3.300 3.300-2.800 2.800-3.300-3.300z" fill="#f8e070" stroke="#a07808" stroke-width="0.900"/>
<ellipse cx="8" cy="5.800" rx="7.600" ry="2.900" fill="#3f93dc" stroke="#1f6cb4" stroke-width="0.800"/>
<path d="M3.800 5.300c0-6 8.400-6 8.400 0c-2 1.300-6.400 1.300-8.400 0z" fill="#7cc2f2" stroke="#2a7cc4" stroke-width="0.700"/></svg>
<span class="t" style="top:283.00px;font:12px/1 'Liberation Sans',sans-serif;color:#000;left:81.00px;transform:scaleX(0.9483);">MQL4 Source File</span>
<div class="r" style="left:47px;top:308px;width:10px;height:1px;background:repeating-linear-gradient(90deg,#888 0 1px,transparent 1px 2px);"></div>
<svg class="r" style="left:59px;top:299px" width="17" height="16" viewBox="0 0 17 16"><circle cx="7.500" cy="9.300" r="3.400" fill="#f4d040" stroke="#b08a10" stroke-width="0.800"/>
<path d="M11.500 9.500l3.300 3.300-2.800 2.800-3.300-3.300z" fill="#f8e070" stroke="#a07808" stroke-width="0.900"/>
<ellipse cx="8" cy="5.800" rx="7.600" ry="2.900" fill="#3f93dc" stroke="#1f6cb4" stroke-width="0.800"/>
<path d="M3.800 5.300c0-6 8.400-6 8.400 0c-2 1.300-6.400 1.300-8.400 0z" fill="#7cc2f2" stroke="#2a7cc4" stroke-width="0.700"/></svg>
<span class="t" style="top:301.00px;font:12px/1 'Liberation Sans',sans-serif;color:#000;left:81.00px;transform:scaleX(0.9384);">Panel</span>
<div class="r" style="left:47px;top:326px;width:10px;height:1px;background:repeating-linear-gradient(90deg,#888 0 1px,transparent 1px 2px);"></div>
<svg class="r" style="left:59px;top:317px" width="17" height="16" viewBox="0 0 17 16"><circle cx="7.500" cy="9.300" r="3.400" fill="#f4d040" stroke="#b08a10" stroke-width="0.800"/>
<path d="M11.500 9.500l3.300 3.300-2.800 2.800-3.300-3.300z" fill="#f8e070" stroke="#a07808" stroke-width="0.900"/>
<ellipse cx="8" cy="5.800" rx="7.600" ry="2.900" fill="#3f93dc" stroke="#1f6cb4" stroke-width="0.800"/>
<path d="M3.800 5.300c0-6 8.400-6 8.400 0c-2 1.300-6.400 1.300-8.400 0z" fill="#7cc2f2" stroke="#2a7cc4" stroke-width="0.700"/></svg>
<span class="t" style="top:319.00px;font:12px/1 'Liberation Sans',sans-serif;color:#000;left:81.00px;transform:scaleX(0.9101);">Railis</span>
<div class="r" style="left:47px;top:344px;width:10px;height:1px;background:repeating-linear-gradient(90deg,#888 0 1px,transparent 1px 2px);"></div>
<svg class="r" style="left:59px;top:335px" width="17" height="16" viewBox="0 0 17 16"><circle cx="7.500" cy="9.300" r="3.400" fill="#f4d040" stroke="#b08a10" stroke-width="0.800"/>
<path d="M11.500 9.500l3.300 3.300-2.800 2.800-3.300-3.300z" fill="#f8e070" stroke="#a07808" stroke-width="0.900"/>
<ellipse cx="8" cy="5.800" rx="7.600" ry="2.900" fill="#3f93dc" stroke="#1f6cb4" stroke-width="0.800"/>
<path d="M3.800 5.300c0-6 8.400-6 8.400 0c-2 1.300-6.400 1.300-8.400 0z" fill="#7cc2f2" stroke="#2a7cc4" stroke-width="0.700"/></svg>
<span class="t" style="top:337.00px;font:12px/1 'Liberation Sans',sans-serif;color:#000;left:81.00px;transform:scaleX(0.8997);">ras 1</span>
<div class="r" style="left:47px;top:362px;width:10px;height:1px;background:repeating-linear-gradient(90deg,#888 0 1px,transparent 1px 2px);"></div>
<svg class="r" style="left:59px;top:353px" width="17" height="16" viewBox="0 0 17 16"><circle cx="7.500" cy="9.300" r="3.400" fill="#f4d040" stroke="#b08a10" stroke-width="0.800"/>
<path d="M11.500 9.500l3.300 3.300-2.800 2.800-3.300-3.300z" fill="#f8e070" stroke="#a07808" stroke-width="0.900"/>
<ellipse cx="8" cy="5.800" rx="7.600" ry="2.900" fill="#3f93dc" stroke="#1f6cb4" stroke-width="0.800"/>
<path d="M3.800 5.300c0-6 8.400-6 8.400 0c-2 1.300-6.400 1.300-8.400 0z" fill="#7cc2f2" stroke="#2a7cc4" stroke-width="0.700"/></svg>
<span class="t" style="top:355.00px;font:12px/1 'Liberation Sans',sans-serif;color:#000;left:81.00px;transform:scaleX(0.8997);">ras 2</span>
<div class="r" style="left:47px;top:380px;width:10px;height:1px;background:repeating-linear-gradient(90deg,#888 0 1px,transparent 1px 2px);"></div>
<svg class="r" style="left:59px;top:371px" width="17" height="16" viewBox="0 0 17 16"><circle cx="7.500" cy="9.300" r="3.400" fill="#f4d040" stroke="#b08a10" stroke-width="0.800"/>
<path d="M11.500 9.500l3.300 3.300-2.800 2.800-3.300-3.300z" fill="#f8e070" stroke="#a07808" stroke-width="0.900"/>
<ellipse cx="8" cy="5.800" rx="7.600" ry="2.900" fill="#3f93dc" stroke="#1f6cb4" stroke-width="0.800"/>
<path d="M3.800 5.300c0-6 8.400-6 8.400 0c-2 1.300-6.400 1.300-8.400 0z" fill="#7cc2f2" stroke="#2a7cc4" stroke-width="0.700"/></svg>
<span class="t" style="top:373.00px;font:12px/1 'Liberation Sans',sans-serif;color:#000;left:81.00px;transform:scaleX(0.8997);">ras 3</span>
<div class="r" style="left:47px;top:398px;width:10px;height:1px;background:repeating-linear-gradient(90deg,#888 0 1px,transparent 1px 2px);"></div>
<svg class="r" style="left:59px;top:389px" width="17" height="16" viewBox="0 0 17 16"><circle cx="7.500" cy="9.300" r="3.400" fill="#f4d040" stroke="#b08a10" stroke-width="0.800"/>
<path d="M11.500 9.500l3.300 3.300-2.800 2.800-3.300-3.300z" fill="#f8e070" stroke="#a07808" stroke-width="0.900"/>
<ellipse cx="8" cy="5.800" rx="7.600" ry="2.900" fill="#3f93dc" stroke="#1f6cb4" stroke-width="0.800"/>
<path d="M3.800 5.300c0-6 8.400-6 8.400 0c-2 1.300-6.400 1.300-8.400 0z" fill="#7cc2f2" stroke="#2a7cc4" stroke-width="0.700"/></svg>
<span class="t" style="top:391.00px;font:12px/1 'Liberation Sans',sans-serif;color:#000;left:81.00px;transform:scaleX(0.8745);">XAS</span>
<div class="r" style="left:47px;top:416px;width:10px;height:1px;background:repeating-linear-gradient(90deg,#888 0 1px,transparent 1px 2px);"></div>
<svg class="r" style="left:59px;top:407px" width="17" height="14" viewBox="0 0 17 14"><circle cx="7.500" cy="9.300" r="3.400" fill="#f4d040" stroke="#b08a10" stroke-width="0.800"/>
<path d="M11.500 9.500l3.300 3.300-2.800 2.800-3.300-3.300z" fill="#f8e070" stroke="#a07808" stroke-width="0.900"/>
<ellipse cx="8" cy="5.800" rx="7.600" ry="2.900" fill="#3f93dc" stroke="#1f6cb4" stroke-width="0.800"/>
<path d="M3.800 5.300c0-6 8.400-6 8.400 0c-2 1.300-6.400 1.300-8.400 0z" fill="#7cc2f2" stroke="#2a7cc4" stroke-width="0.700"/></svg>
<span class="t" style="top:409.00px;font:12px/1 'Liberation Sans',sans-serif;color:#000;left:81.00px;transform:scaleX(0.8965);">XAS 1</span>
<div class="r" style="left:12px;top:421px;width:339px;height:20px;background:#f0f0f0;"></div>
<div class="r" style="left:333px;top:279px;width:17px;height:142px;background:linear-gradient(90deg,#e4e4e4,#f4f4f4 40%,#f0f0f0);"></div><svg class="r" style="left:338px;top:286px" width="7" height="4" viewBox="0 0 7 4"><path d="M0 4L3.500 0L7 4Z" fill="#555"/></svg><svg class="r" style="left:338px;top:411px" width="7" height="4" viewBox="0 0 7 4"><path d="M0 0L3.500 4L7 0Z" fill="#555"/></svg><div class="r" style="left:335px;top:378px;width:14px;height:14px;background:linear-gradient(90deg,#f4f4f4,#dcdcdc 50%,#c8c8c8);box-shadow:inset 0 0 0 1px #979797;border-radius:2px;"></div>
<div class="r" style="left:11px;top:421px;width:341px;height:1px;background:#000;"></div>
<div class="r" style="left:14px;top:421px;width:60px;height:20px;background:#fff;box-shadow:inset 1px 0 0 #000,inset -1px -1px 0 #000,1px 1px 0 #808080;"></div>
<span class="t" style="top:425.00px;font:12px/1 'Liberation Sans',sans-serif;color:#000;left:25.00px;transform:scaleX(0.9884);">Общие</span>
<span class="t" style="top:425.00px;font:12px/1 'Liberation Sans',sans-serif;color:#808080;left:84.40px;transform:scaleX(0.9883);">Избранное</span>
<div class="r" style="left:155px;top:426px;width:1px;height:13px;background:#808080;"></div>
<div class="r" style="left:351px;top:78px;width:4px;height:370px;background:#fafafa;"></div>
<div class="r" style="left:355px;top:78px;width:1px;height:370px;background:#808080;"></div>
<svg class="r" style="left:356px;top:78px" width="667" height="347" viewBox="356 78 667 347"><rect x="356" y="78" width="667" height="347" fill="#000"/><circle cx="381" cy="205" r="10.500" fill="#8b7b6b" stroke="#7f91a6" stroke-width="1"/><circle cx="372.5" cy="213" r="10.500" fill="#8b7b6b" stroke="#7f91a6" stroke-width="1"/><circle cx="372.5" cy="225" r="10.500" fill="#8b7b6b" stroke="#7f91a6" stroke-width="1"/><circle cx="392.6" cy="212.6" r="10.500" fill="#8b7b6b" stroke="#7f91a6" stroke-width="1"/><circle cx="431.5" cy="217" r="10.500" fill="#8b7b6b" stroke="#7f91a6" stroke-width="1"/><circle cx="430" cy="228" r="10.500" fill="#8b7b6b" stroke="#7f91a6" stroke-width="1"/><circle cx="439" cy="229" r="10.500" fill="#8b7b6b" stroke="#7f91a6" stroke-width="1"/><circle cx="439" cy="239" r="10.500" fill="#8b7b6b" stroke="#7f91a6" stroke-width="1"/><circle cx="429" cy="240" r="10.500" fill="#8b7b6b" stroke="#7f91a6" stroke-width="1"/><circle cx="455.4" cy="250" r="10.500" fill="#8b7b6b" stroke="#7f91a6" stroke-width="1"/><circle cx="455.4" cy="259" r="10.500" fill="#8b7b6b" stroke="#7f91a6" stroke-width="1"/><circle cx="567" cy="240.7" r="10.500" fill="#8b7b6b" stroke="#7f91a6" stroke-width="1"/><circle cx="583.4" cy="247.8" r="10.500" fill="#8b7b6b" stroke="#7f91a6" stroke-width="1"/><circle cx="607" cy="258" r="10.500" fill="#8b7b6b" stroke="#7f91a6" stroke-width="1"/><circle cx="631" cy="265" r="10.500" fill="#8b7b6b" stroke="#7f91a6" stroke-width="1"/><circle cx="631" cy="275" r="10.500" fill="#8b7b6b" stroke="#7f91a6" stroke-width="1"/><circle cx="645" cy="268" r="10.500" fill="#8b7b6b" stroke="#7f91a6" stroke-width="1"/><circle cx="645" cy="278" r="10.500" fill="#8b7b6b" stroke="#7f91a6" stroke-width="1"/><circle cx="654" cy="255" r="10.500" fill="#8b7b6b" stroke="#7f91a6" stroke-width="1"/><circle cx="661.5" cy="259" r="10.500" fill="#8b7b6b" stroke="#7f91a6" stroke-width="1"/><circle cx="679" cy="256.5" r="10.500" fill="#8b7b6b" stroke="#7f91a6" stroke-width="1"/><circle cx="718" cy="265" r="10.500" fill="#8b7b6b" stroke="#7f91a6" stroke-width="1"/><circle cx="735.5" cy="256.5" r="10.500" fill="#8b7b6b" stroke="#7f91a6" stroke-width="1"/><circle cx="750.5" cy="265" r="10.500" fill="#8b7b6b" stroke="#7f91a6" stroke-width="1"/><circle cx="750.5" cy="274" r="10.500" fill="#8b7b6b" stroke="#7f91a6" stroke-width="1"/><circle cx="750.5" cy="284" r="10.500" fill="#8b7b6b" stroke="#7f91a6" stroke-width="1"/><circle cx="759" cy="283" r="10.500" fill="#8b7b6b" stroke="#7f91a6" stroke-width="1"/><circle cx="757" cy="297" r="10.500" fill="#8b7b6b" stroke="#7f91a6" stroke-width="1"/><circle cx="763" cy="308" r="10.500" fill="#8b7b6b" stroke="#7f91a6" stroke-width="1"/><circle cx="770.6" cy="304" r="10.500" fill="#8b7b6b" stroke="#7f91a6" stroke-width="1"/><circle cx="782" cy="293" r="10.500" fill="#8b7b6b" stroke="#7f91a6" stroke-width="1"/><circle cx="785.7" cy="303" r="10.500" fill="#8b7b6b" stroke="#7f91a6" stroke-width="1"/><circle cx="805.8" cy="301" r="10.500" fill="#8b7b6b" stroke="#7f91a6" stroke-width="1"/><circle cx="807" cy="311" r="10.500" fill="#8b7b6b" stroke="#7f91a6" stroke-width="1"/><circle cx="808" cy="321" r="10.500" fill="#8b7b6b" stroke="#7f91a6" stroke-width="1"/><circle cx="823" cy="288" r="10.500" fill="#8b7b6b" stroke="#7f91a6" stroke-width="1"/><circle cx="823" cy="298" r="10.500" fill="#8b7b6b" stroke="#7f91a6" stroke-width="1"/><circle cx="818" cy="308" r="10.500" fill="#8b7b6b" stroke="#7f91a6" stroke-width="1"/><path d="M358.5 221.9V228.1M355.5 225.2H358.5M358.5 224.5H361.5M366.5 216.8V224.9M363.5 221.4H366.5M366.5 219.1H369.5M374.5 214.1V219.2M371.5 218.0H374.5M374.5 215.7H377.5M382.5 202.5V208.7M379.5 207.6H382.5M382.5 205.5H385.5M390.5 205.7V214.8M387.5 210.2H390.5M390.5 210.8H393.5M398.5 208.4V214.2M395.5 211.8H398.5M398.5 212.8H401.5M406.5 207.2V214.8M403.5 212.0H406.5M406.5 211.7H409.5M414.5 208.3V213.7M411.5 212.0H414.5M414.5 211.4H417.5M422.5 208.7V215.3M419.5 210.1H422.5M422.5 213.5H425.5M430.5 217.0V224.4M427.5 221.6H430.5M430.5 222.2H433.5M438.5 229.5V238.1M435.5 235.5H438.5M438.5 233.4H441.5M446.5 241.5V250.5M443.5 245.8H446.5M446.5 247.7H449.5M454.5 247.7V257.1M451.5 250.8H454.5M454.5 250.9H457.5M462.5 248.2V254.3M459.5 253.1H462.5M462.5 251.0H465.5M470.5 247.4V255.6M467.5 250.7H470.5M470.5 251.5H473.5M478.5 243.6V250.5M475.5 246.5H478.5M478.5 247.4H481.5M486.5 244.7V252.6M483.5 250.3H486.5M486.5 249.4H489.5M494.5 246.2V255.9M491.5 252.5H494.5M494.5 253.0H497.5M502.5 248.6V257.0M499.5 251.5H502.5M502.5 254.2H505.5M510.5 246.5V256.4M507.5 253.1H510.5M510.5 251.7H513.5M518.5 245.0V253.6M515.5 248.1H518.5M518.5 250.6H521.5M526.5 243.5V251.4M523.5 246.6H526.5M526.5 245.7H529.5M534.5 241.4V250.6M531.5 247.9H534.5M534.5 244.3H537.5M542.5 242.6V251.6M539.5 246.8H542.5M542.5 245.7H545.5M550.5 244.7V251.2M547.5 249.0H550.5M550.5 249.4H553.5M558.5 244.2V249.4M555.5 247.3H558.5M558.5 245.0H561.5M566.5 237.2V245.8M563.5 240.8H566.5M566.5 243.0H569.5M574.5 238.6V248.5M571.5 243.6H574.5M574.5 245.6H577.5M582.5 244.2V250.8M579.5 245.8H582.5M582.5 247.9H585.5M590.5 244.5V249.7M587.5 245.9H590.5M590.5 246.8H593.5M598.5 243.0V251.0M595.5 245.6H598.5M598.5 245.2H601.5M606.5 251.8V261.2M603.5 255.7H606.5M606.5 258.3H609.5M614.5 257.9V267.4M611.5 262.2H614.5M614.5 262.5H617.5M622.5 257.2V264.8M619.5 261.6H622.5M622.5 261.4H625.5M630.5 264.7V272.5M627.5 269.1H630.5M630.5 270.3H633.5M638.5 268.2V275.8M635.5 271.7H638.5M638.5 272.9H641.5M646.5 268.8V275.0M643.5 271.1H646.5M646.5 273.8H649.5M654.5 251.2V258.8M651.5 255.2H654.5M654.5 253.0H657.5M662.5 255.8V262.9M659.5 259.7H662.5M662.5 257.5H665.5M670.5 258.4V266.5M667.5 263.0H670.5M670.5 260.7H673.5M678.5 252.9V261.0M675.5 256.8H678.5M678.5 257.7H681.5M686.5 251.7V258.5M683.5 256.0H686.5M686.5 256.1H689.5M694.5 252.4V257.6M691.5 253.2H694.5M694.5 255.7H697.5M702.5 254.5V264.3M699.5 258.4H702.5M702.5 259.2H705.5M710.5 257.5V265.5M707.5 260.8H710.5M710.5 261.0H713.5M718.5 261.7V268.3M715.5 264.5H718.5M718.5 265.4H721.5M726.5 260.3V266.8M723.5 263.1H726.5M726.5 264.7H729.5M734.5 254.3V259.4M731.5 257.1H734.5M734.5 257.8H737.5M742.5 254.5V261.0M739.5 256.6H742.5M742.5 259.0H745.5M750.5 266.9V273.1M747.5 268.7H750.5M750.5 269.7H753.5M758.5 297.4V305.9M755.5 300.1H758.5M758.5 301.0H761.5M766.5 304.4V311.1M763.5 309.1H766.5M766.5 307.5H769.5M774.5 296.9V306.2M771.5 300.2H774.5M774.5 300.9H777.5M782.5 290.9V299.1M779.5 296.5H782.5M782.5 294.8H785.5M790.5 304.4V310.5M787.5 305.9H790.5M790.5 307.5H793.5M798.5 304.2V310.1M795.5 308.4H798.5M798.5 308.5H801.5M806.5 300.0V306.0M803.5 302.1H806.5M806.5 304.2H809.5M814.5 307.9V316.1M811.5 313.2H814.5M814.5 311.4H817.5M822.5 293.2V298.8M819.5 295.2H822.5M822.5 297.2H825.5M830.5 284.8V291.2M827.5 287.4H830.5M830.5 287.7H833.5" stroke="#0f0" stroke-width="1" fill="none" shape-rendering="crispEdges"/><g transform="translate(381.5,205)"><path d="M-6 0L-2 -4V-2H0V2H-2V4Z" fill="#fff" stroke="#fff" stroke-width="2" stroke-linejoin="miter"/><path d="M-6 0L-2 -4V-2H0.300V2H-2V4Z" fill="#007a00"/><path d="M0.500 0L5.500 -5V5Z" fill="#fff" stroke="#fff" stroke-width="1"/><path d="M1.800 0L4.800 -3.200V3.200Z" fill="#dca030"/></g><g transform="translate(373.0,213)"><path d="M-6 0L-2 -4V-2H0V2H-2V4Z" fill="#fff" stroke="#fff" stroke-width="2" stroke-linejoin="miter"/><path d="M-6 0L-2 -4V-2H0.300V2H-2V4Z" fill="#007a00"/><path d="M0.500 0L5.500 -5V5Z" fill="#fff" stroke="#fff" stroke-width="1"/><path d="M1.800 0L4.800 -3.200V3.200Z" fill="#dca030"/></g><g transform="translate(373.0,225)"><path d="M-6 0L-2 -4V-2H0V2H-2V4Z" fill="#fff" stroke="#fff" stroke-width="2" stroke-linejoin="miter"/><path d="M-6 0L-2 -4V-2H0.300V2H-2V4Z" fill="#007a00"/><path d="M0.500 0L5.500 -5V5Z" fill="#fff" stroke="#fff" stroke-width="1"/><path d="M1.800 0L4.800 -3.200V3.200Z" fill="#dca030"/></g><g transform="translate(393.1,212.6)"><path d="M-6 0L-2 -4V-2H0V2H-2V4Z" fill="#fff" stroke="#fff" stroke-width="2" stroke-linejoin="miter"/><path d="M-6 0L-2 -4V-2H0.300V2H-2V4Z" fill="#007a00"/><path d="M0.500 0L5.500 -5V5Z" fill="#fff" stroke="#fff" stroke-width="1"/><path d="M1.800 0L4.800 -3.200V3.200Z" fill="#dca030"/></g><g transform="translate(432.0,217)"><path d="M-6 0L-2 -4V-2H0V2H-2V4Z" fill="#fff" stroke="#fff" stroke-width="2" stroke-linejoin="miter"/><path d="M-6 0L-2 -4V-2H0.300V2H-2V4Z" fill="#007a00"/><path d="M0.500 0L5.500 -5V5Z" fill="#fff" stroke="#fff" stroke-width="1"/><path d="M1.800 0L4.800 -3.200V3.200Z" fill="#dca030"/></g><g transform="translate(430.5,228)"><path d="M-6 0L-2 -4V-2H0V2H-2V4Z" fill="#fff" stroke="#fff" stroke-width="2" stroke-linejoin="miter"/><path d="M-6 0L-2 -4V-2H0.300V2H-2V4Z" fill="#007a00"/><path d="M0.500 0L5.500 -5V5Z" fill="#fff" stroke="#fff" stroke-width="1"/><path d="M1.800 0L4.800 -3.200V3.200Z" fill="#dca030"/></g><g transform="translate(439.5,229)"><path d="M-6 0L-2 -4V-2H0V2H-2V4Z" fill="#fff" stroke="#fff" stroke-width="2" stroke-linejoin="miter"/><path d="M-6 0L-2 -4V-2H0.300V2H-2V4Z" fill="#007a00"/><path d="M0.500 0L5.500 -5V5Z" fill="#fff" stroke="#fff" stroke-width="1"/><path d="M1.800 0L4.800 -3.200V3.200Z" fill="#dca030"/></g><g transform="translate(439.5,239)"><path d="M-6 0L-2 -4V-2H0V2H-2V4Z" fill="#fff" stroke="#fff" stroke-width="2" stroke-linejoin="miter"/><path d="M-6 0L-2 -4V-2H0.300V2H-2V4Z" fill="#007a00"/><path d="M0.500 0L5.500 -5V5Z" fill="#fff" stroke="#fff" stroke-width="1"/><path d="M1.800 0L4.800 -3.200V3.200Z" fill="#dca030"/></g><g transform="translate(429.5,240)"><path d="M-6 0L-2 -4V-2H0V2H-2V4Z" fill="#fff" stroke="#fff" stroke-width="2" stroke-linejoin="miter"/><path d="M-6 0L-2 -4V-2H0.300V2H-2V4Z" fill="#007a00"/><path d="M0.500 0L5.500 -5V5Z" fill="#fff" stroke="#fff" stroke-width="1"/><path d="M1.800 0L4.800 -3.200V3.200Z" fill="#dca030"/></g><g transform="translate(455.9,250)"><path d="M-6 0L-2 -4V-2H0V2H-2V4Z" fill="#fff" stroke="#fff" stroke-width="2" stroke-linejoin="miter"/><path d="M-6 0L-2 -4V-2H0.300V2H-2V4Z" fill="#007a00"/><path d="M0.500 0L5.500 -5V5Z" fill="#fff" stroke="#fff" stroke-width="1"/><path d="M1.800 0L4.800 -3.200V3.200Z" fill="#dca030"/></g><g transform="translate(455.9,259)"><path d="M-6 0L-2 -4V-2H0V2H-2V4Z" fill="#fff" stroke="#fff" stroke-width="2" stroke-linejoin="miter"/><path d="M-6 0L-2 -4V-2H0.300V2H-2V4Z" fill="#007a00"/><path d="M0.500 0L5.500 -5V5Z" fill="#fff" stroke="#fff" stroke-width="1"/><path d="M1.800 0L4.800 -3.200V3.200Z" fill="#dca030"/></g><g transform="translate(567.5,240.7)"><path d="M-6 0L-2 -4V-2H0V2H-2V4Z" fill="#fff" stroke="#fff" stroke-width="2" stroke-linejoin="miter"/><path d="M-6 0L-2 -4V-2H0.300V2H-2V4Z" fill="#007a00"/><path d="M0.500 0L5.500 -5V5Z" fill="#fff" stroke="#fff" stroke-width="1"/><path d="M1.800 0L4.800 -3.200V3.200Z" fill="#dca030"/></g><g transform="translate(583.9,247.8)"><path d="M-6 0L-2 -4V-2H0V2H-2V4Z" fill="#fff" stroke="#fff" stroke-width="2" stroke-linejoin="miter"/><path d="M-6 0L-2 -4V-2H0.300V2H-2V4Z" fill="#007a00"/><path d="M0.500 0L5.500 -5V5Z" fill="#fff" stroke="#fff" stroke-width="1"/><path d="M1.800 0L4.800 -3.200V3.200Z" fill="#dca030"/></g><g transform="translate(607.5,258)"><path d="M-6 0L-2 -4V-2H0V2H-2V4Z" fill="#fff" stroke="#fff" stroke-width="2" stroke-linejoin="miter"/><path d="M-6 0L-2 -4V-2H0.300V2H-2V4Z" fill="#007a00"/><path d="M0.500 0L5.500 -5V5Z" fill="#fff" stroke="#fff" stroke-width="1"/><path d="M1.800 0L4.800 -3.200V3.200Z" fill="#dca030"/></g><g transform="translate(631.5,265)"><path d="M-6 0L-2 -4V-2H0V2H-2V4Z" fill="#fff" stroke="#fff" stroke-width="2" stroke-linejoin="miter"/><path d="M-6 0L-2 -4V-2H0.300V2H-2V4Z" fill="#007a00"/><path d="M0.500 0L5.500 -5V5Z" fill="#fff" stroke="#fff" stroke-width="1"/><path d="M1.800 0L4.800 -3.200V3.200Z" fill="#dca030"/></g><g transform="translate(631.5,275)"><path d="M-6 0L-2 -4V-2H0V2H-2V4Z" fill="#fff" stroke="#fff" stroke-width="2" stroke-linejoin="miter"/><path d="M-6 0L-2 -4V-2H0.300V2H-2V4Z" fill="#007a00"/><path d="M0.500 0L5.500 -5V5Z" fill="#fff" stroke="#fff" stroke-width="1"/><path d="M1.800 0L4.800 -3.200V3.200Z" fill="#dca030"/></g><g transform="translate(645.5,268)"><path d="M-6 0L-2 -4V-2H0V2H-2V4Z" fill="#fff" stroke="#fff" stroke-width="2" stroke-linejoin="miter"/><path d="M-6 0L-2 -4V-2H0.300V2H-2V4Z" fill="#007a00"/><path d="M0.500 0L5.500 -5V5Z" fill="#fff" stroke="#fff" stroke-width="1"/><path d="M1.800 0L4.800 -3.200V3.200Z" fill="#dca030"/></g><g transform="translate(645.5,278)"><path d="M-6 0L-2 -4V-2H0V2H-2V4Z" fill="#fff" stroke="#fff" stroke-width="2" stroke-linejoin="miter"/><path d="M-6 0L-2 -4V-2H0.300V2H-2V4Z" fill="#007a00"/><path d="M0.500 0L5.500 -5V5Z" fill="#fff" stroke="#fff" stroke-width="1"/><path d="M1.800 0L4.800 -3.200V3.200Z" fill="#dca030"/></g><g transform="translate(654.5,255)"><path d="M-6 0L-2 -4V-2H0V2H-2V4Z" fill="#fff" stroke="#fff" stroke-width="2" stroke-linejoin="miter"/><path d="M-6 0L-2 -4V-2H0.300V2H-2V4Z" fill="#007a00"/><path d="M0.500 0L5.500 -5V5Z" fill="#fff" stroke="#fff" stroke-width="1"/><path d="M1.800 0L4.800 -3.200V3.200Z" fill="#dca030"/></g><g transform="translate(662.0,259)"><path d="M-6 0L-2 -4V-2H0V2H-2V4Z" fill="#fff" stroke="#fff" stroke-width="2" stroke-linejoin="miter"/><path d="M-6 0L-2 -4V-2H0.300V2H-2V4Z" fill="#007a00"/><path d="M0.500 0L5.500 -5V5Z" fill="#fff" stroke="#fff" stroke-width="1"/><path d="M1.800 0L4.800 -3.200V3.200Z" fill="#dca030"/></g><g transform="translate(679.5,256.5)"><path d="M-6 0L-2 -4V-2H0V2H-2V4Z" fill="#fff" stroke="#fff" stroke-width="2" stroke-linejoin="miter"/><path d="M-6 0L-2 -4V-2H0.300V2H-2V4Z" fill="#007a00"/><path d="M0.500 0L5.500 -5V5Z" fill="#fff" stroke="#fff" stroke-width="1"/><path d="M1.800 0L4.800 -3.200V3.200Z" fill="#dca030"/></g><g transform="translate(718.5,265)"><path d="M-6 0L-2 -4V-2H0V2H-2V4Z" fill="#fff" stroke="#fff" stroke-width="2" stroke-linejoin="miter"/><path d="M-6 0L-2 -4V-2H0.300V2H-2V4Z" fill="#007a00"/><path d="M0.500 0L5.500 -5V5Z" fill="#fff" stroke="#fff" stroke-width="1"/><path d="M1.800 0L4.800 -3.200V3.200Z" fill="#dca030"/></g><g transform="translate(736.0,256.5)"><path d="M-6 0L-2 -4V-2H0V2H-2V4Z" fill="#fff" stroke="#fff" stroke-width="2" stroke-linejoin="miter"/><path d="M-6 0L-2 -4V-2H0.300V2H-2V4Z" fill="#007a00"/><path d="M0.500 0L5.500 -5V5Z" fill="#fff" stroke="#fff" stroke-width="1"/><path d="M1.800 0L4.800 -3.200V3.200Z" fill="#dca030"/></g><g transform="translate(751.0,265)"><path d="M-6 0L-2 -4V-2H0V2H-2V4Z" fill="#fff" stroke="#fff" stroke-width="2" stroke-linejoin="miter"/><path d="M-6 0L-2 -4V-2H0.300V2H-2V4Z" fill="#007a00"/><path d="M0.500 0L5.500 -5V5Z" fill="#fff" stroke="#fff" stroke-width="1"/><path d="M1.800 0L4.800 -3.200V3.200Z" fill="#dca030"/></g><g transform="translate(751.0,274)"><path d="M-6 0L-2 -4V-2H0V2H-2V4Z" fill="#fff" stroke="#fff" stroke-width="2" stroke-linejoin="miter"/><path d="M-6 0L-2 -4V-2H0.300V2H-2V4Z" fill="#007a00"/><path d="M0.500 0L5.500 -5V5Z" fill="#fff" stroke="#fff" stroke-width="1"/><path d="M1.800 0L4.800 -3.200V3.200Z" fill="#dca030"/></g><g transform="translate(751.0,284)"><path d="M-6 0L-2 -4V-2H0V2H-2V4Z" fill="#fff" stroke="#fff" stroke-width="2" stroke-linejoin="miter"/><path d="M-6 0L-2 -4V-2H0.300V2H-2V4Z" fill="#007a00"/><path d="M0.500 0L5.500 -5V5Z" fill="#fff" stroke="#fff" stroke-width="1"/><path d="M1.800 0L4.800 -3.200V3.200Z" fill="#dca030"/></g><g transform="translate(759.5,283)"><path d="M-6 0L-2 -4V-2H0V2H-2V4Z" fill="#fff" stroke="#fff" stroke-width="2" stroke-linejoin="miter"/><path d="M-6 0L-2 -4V-2H0.300V2H-2V4Z" fill="#007a00"/><path d="M0.500 0L5.500 -5V5Z" fill="#fff" stroke="#fff" stroke-width="1"/><path d="M1.800 0L4.800 -3.200V3.200Z" fill="#dca030"/></g><g transform="translate(757.5,297)"><path d="M-6 0L-2 -4V-2H0V2H-2V4Z" fill="#fff" stroke="#fff" stroke-width="2" stroke-linejoin="miter"/><path d="M-6 0L-2 -4V-2H0.300V2H-2V4Z" fill="#007a00"/><path d="M0.500 0L5.500 -5V5Z" fill="#fff" stroke="#fff" stroke-width="1"/><path d="M1.800 0L4.800 -3.200V3.200Z" fill="#dca030"/></g><g transform="translate(763.5,308)"><path d="M-6 0L-2 -4V-2H0V2H-2V4Z" fill="#fff" stroke="#fff" stroke-width="2" stroke-linejoin="miter"/><path d="M-6 0L-2 -4V-2H0.300V2H-2V4Z" fill="#007a00"/><path d="M0.500 0L5.500 -5V5Z" fill="#fff" stroke="#fff" stroke-width="1"/><path d="M1.800 0L4.800 -3.200V3.200Z" fill="#dca030"/></g><g transform="translate(771.1,304)"><path d="M-6 0L-2 -4V-2H0V2H-2V4Z" fill="#fff" stroke="#fff" stroke-width="2" stroke-linejoin="miter"/><path d="M-6 0L-2 -4V-2H0.300V2H-2V4Z" fill="#007a00"/><path d="M0.500 0L5.500 -5V5Z" fill="#fff" stroke="#fff" stroke-width="1"/><path d="M1.800 0L4.800 -3.200V3.200Z" fill="#dca030"/></g><g transform="translate(782.5,293)"><path d="M-6 0L-2 -4V-2H0V2H-2V4Z" fill="#fff" stroke="#fff" stroke-width="2" stroke-linejoin="miter"/><path d="M-6 0L-2 -4V-2H0.300V2H-2V4Z" fill="#007a00"/><path d="M0.500 0L5.500 -5V5Z" fill="#fff" stroke="#fff" stroke-width="1"/><path d="M1.800 0L4.800 -3.200V3.200Z" fill="#dca030"/></g><g transform="translate(786.2,303)"><path d="M-6 0L-2 -4V-2H0V2H-2V4Z" fill="#fff" stroke="#fff" stroke-width="2" stroke-linejoin="miter"/><path d="M-6 0L-2 -4V-2H0.300V2H-2V4Z" fill="#007a00"/><path d="M0.500 0L5.500 -5V5Z" fill="#fff" stroke="#fff" stroke-width="1"/><path d="M1.800 0L4.800 -3.200V3.200Z" fill="#dca030"/></g><g transform="translate(806.3,301)"><path d="M-6 0L-2 -4V-2H0V2H-2V4Z" fill="#fff" stroke="#fff" stroke-width="2" stroke-linejoin="miter"/><path d="M-6 0L-2 -4V-2H0.300V2H-2V4Z" fill="#007a00"/><path d="M0.500 0L5.500 -5V5Z" fill="#fff" stroke="#fff" stroke-width="1"/><path d="M1.800 0L4.800 -3.200V3.200Z" fill="#dca030"/></g><g transform="translate(807.5,311)"><path d="M-6 0L-2 -4V-2H0V2H-2V4Z" fill="#fff" stroke="#fff" stroke-width="2" stroke-linejoin="miter"/><path d="M-6 0L-2 -4V-2H0.300V2H-2V4Z" fill="#007a00"/><path d="M0.500 0L5.500 -5V5Z" fill="#fff" stroke="#fff" stroke-width="1"/><path d="M1.800 0L4.800 -3.200V3.200Z" fill="#dca030"/></g><g transform="translate(808.5,321)"><path d="M-6 0L-2 -4V-2H0V2H-2V4Z" fill="#fff" stroke="#fff" stroke-width="2" stroke-linejoin="miter"/><path d="M-6 0L-2 -4V-2H0.300V2H-2V4Z" fill="#007a00"/><path d="M0.500 0L5.500 -5V5Z" fill="#fff" stroke="#fff" stroke-width="1"/><path d="M1.800 0L4.800 -3.200V3.200Z" fill="#dca030"/></g><g transform="translate(823.5,288)"><path d="M-6 0L-2 -4V-2H0V2H-2V4Z" fill="#fff" stroke="#fff" stroke-width="2" stroke-linejoin="miter"/><path d="M-6 0L-2 -4V-2H0.300V2H-2V4Z" fill="#007a00"/><path d="M0.500 0L5.500 -5V5Z" fill="#fff" stroke="#fff" stroke-width="1"/><path d="M1.800 0L4.800 -3.200V3.200Z" fill="#dca030"/></g><g transform="translate(823.5,298)"><path d="M-6 0L-2 -4V-2H0V2H-2V4Z" fill="#fff" stroke="#fff" stroke-width="2" stroke-linejoin="miter"/><path d="M-6 0L-2 -4V-2H0.300V2H-2V4Z" fill="#007a00"/><path d="M0.500 0L5.500 -5V5Z" fill="#fff" stroke="#fff" stroke-width="1"/><path d="M1.800 0L4.800 -3.200V3.200Z" fill="#dca030"/></g><g transform="translate(818.5,308)"><path d="M-6 0L-2 -4V-2H0V2H-2V4Z" fill="#fff" stroke="#fff" stroke-width="2" stroke-linejoin="miter"/><path d="M-6 0L-2 -4V-2H0.300V2H-2V4Z" fill="#007a00"/><path d="M0.500 0L5.500 -5V5Z" fill="#fff" stroke="#fff" stroke-width="1"/><path d="M1.800 0L4.800 -3.200V3.200Z" fill="#dca030"/></g><path d="M358 206L757 302" stroke="#f00" stroke-width="1" stroke-dasharray="4 3" fill="none" shape-rendering="crispEdges"/><path d="M405 216L760 312" stroke="#f00" stroke-width="1" stroke-dasharray="4 3" fill="none" shape-rendering="crispEdges"/><path d="M358 260.5L750 276" stroke="#f00" stroke-width="1" stroke-dasharray="4 3" fill="none" shape-rendering="crispEdges"/><path d="M358 268L750 284" stroke="#f00" stroke-width="1" stroke-dasharray="4 3" fill="none" shape-rendering="crispEdges"/><path d="M358 272L760 319" stroke="#f00" stroke-width="1" stroke-dasharray="4 3" fill="none" shape-rendering="crispEdges"/><path d="M358 284.6L763 318" stroke="#f00" stroke-width="1" stroke-dasharray="4 3" fill="none" shape-rendering="crispEdges"/><path d="M358 288L785 321" stroke="#f00" stroke-width="1" stroke-dasharray="4 3" fill="none" shape-rendering="crispEdges"/><path d="M470 298L795 322" stroke="#f00" stroke-width="1" stroke-dasharray="4 3" fill="none" shape-rendering="crispEdges"/><path d="M520 300L806 322" stroke="#f00" stroke-width="1" stroke-dasharray="4 3" fill="none" shape-rendering="crispEdges"/><path d="M470 252L567 241" stroke="#f00" stroke-width="1" stroke-dasharray="4 3" fill="none" shape-rendering="crispEdges"/><path d="M607 258L757 308" stroke="#f00" stroke-width="1" stroke-dasharray="4 3" fill="none" shape-rendering="crispEdges"/><path d="M631 268L770 316" stroke="#f00" stroke-width="1" stroke-dasharray="4 3" fill="none" shape-rendering="crispEdges"/><path d="M645 276L790 320" stroke="#f00" stroke-width="1" stroke-dasharray="4 3" fill="none" shape-rendering="crispEdges"/><path d="M679 258L763 310" stroke="#f00" stroke-width="1" stroke-dasharray="4 3" fill="none" shape-rendering="crispEdges"/><path d="M358 222L430 228" stroke="#00f" stroke-width="1" stroke-dasharray="4 3" fill="none" shape-rendering="crispEdges"/><path d="M358 224L440 234" stroke="#00f" stroke-width="1" stroke-dasharray="4 3" fill="none" shape-rendering="crispEdges"/><path d="M358 246.5L600 256" stroke="#00f" stroke-width="1" stroke-dasharray="4 3" fill="none" shape-rendering="crispEdges"/><path d="M381 205L431 217" stroke="#00f" stroke-width="1" stroke-dasharray="4 3" fill="none" shape-rendering="crispEdges"/><path d="M372 213L430 240" stroke="#00f" stroke-width="1" stroke-dasharray="4 3" fill="none" shape-rendering="crispEdges"/><path d="M392 212.6L455 250" stroke="#00f" stroke-width="1" stroke-dasharray="4 3" fill="none" shape-rendering="crispEdges"/><path d="M455 252L567 241" stroke="#00f" stroke-width="1" stroke-dasharray="4 3" fill="none" shape-rendering="crispEdges"/><path d="M583 248L607 258" stroke="#00f" stroke-width="1" stroke-dasharray="4 3" fill="none" shape-rendering="crispEdges"/><path d="M654 255L679 256.5" stroke="#00f" stroke-width="1" stroke-dasharray="4 3" fill="none" shape-rendering="crispEdges"/><path d="M672 267L740 278" stroke="#00f" stroke-width="1" stroke-dasharray="4 3" fill="none" shape-rendering="crispEdges"/><path d="M718 265L735 256.5" stroke="#00f" stroke-width="1" stroke-dasharray="4 3" fill="none" shape-rendering="crispEdges"/><path d="M750 265L770 304" stroke="#00f" stroke-width="1" stroke-dasharray="4 3" fill="none" shape-rendering="crispEdges"/><path d="M757 297L808 321" stroke="#00f" stroke-width="1" stroke-dasharray="4 3" fill="none" shape-rendering="crispEdges"/><path d="M808 321L823 288" stroke="#00f" stroke-width="1" stroke-dasharray="4 3" fill="none" shape-rendering="crispEdges"/><path d="M631 268L661 259" stroke="#00f" stroke-width="1" stroke-dasharray="4 3" fill="none" shape-rendering="crispEdges"/><path d="M359 284.500H970" stroke="#8c97ab" stroke-width="1"/><path d="M359 287H970" stroke="#2fd02f" stroke-width="2" stroke-dasharray="9 6 3 6"/><path d="M358.500 404V80.500H970.500V404M358 404.500H971" stroke="#fff" stroke-width="1" fill="none"/><path d="M842 81h9l-4.500 4.500z" fill="#8a9cc0"/><path d="M359.5 404V408M423.5 404V408M487.5 404V408M551.5 404V408M615.5 404V408M679.5 404V408M743.5 404V408M807.5 404V408M971 104.5H973M971 137.5H973M971 170.5H973M971 203.5H973M971 236.5H973M971 269.5H973M971 302.5H973M971 335.5H973M971 368.5H973M971 401.5H973" stroke="#fff" stroke-width="1"/><text x="362.5" y="92.0" font-family="Liberation Sans,sans-serif" font-size="9.5" fill="#fff" text-anchor="start" textLength="244.0" lengthAdjust="spacingAndGlyphs">BITCOIN,H1  100966.56 101038.78 100623.35 100955.14</text><text x="365.5" y="284.0" font-family="Liberation Sans,sans-serif" font-size="10" fill="#fff" text-anchor="start" textLength="65.3" lengthAdjust="spacingAndGlyphs">#6018 sell 0.01</text><text x="365.5" y="284.0" font-family="Liberation Sans,sans-serif" font-size="10" fill="#fff" text-anchor="start" textLength="65.3" lengthAdjust="spacingAndGlyphs">#6010 buy 0.01</text><text x="888.7" y="99.0" font-family="Liberation Sans,sans-serif" font-size="13.5" fill="#fff" text-anchor="start" textLength="30.8" lengthAdjust="spacingAndGlyphs">Railis</text><text x="825.3" y="113.5" font-family="Liberation Sans,sans-serif" font-size="13.5" fill="#e51616" text-anchor="start" textLength="133.6" lengthAdjust="spacingAndGlyphs">Magic Number = 11111</text><text x="871.4" y="128.5" font-family="Liberation Sans,sans-serif" font-size="13.5" fill="#e51616" text-anchor="start" textLength="87.5" lengthAdjust="spacingAndGlyphs">Spread = 55.55</text><text x="857.0" y="143.5" font-family="Liberation Sans,sans-serif" font-size="13.5" fill="#e51616" text-anchor="start" textLength="101.9" lengthAdjust="spacingAndGlyphs">Min Dist = 556.00</text><text x="756.0" y="158.5" font-family="Liberation Sans,sans-serif" font-size="13.5" fill="#e51616" text-anchor="start" textLength="202.9" lengthAdjust="spacingAndGlyphs">Account Free Margin = 6017.24170</text><text x="811.0" y="173.5" font-family="Liberation Sans,sans-serif" font-size="13.5" fill="#e51616" text-anchor="start" textLength="147.9" lengthAdjust="spacingAndGlyphs">Fixed Profit = 5019.25778</text><text x="818.6" y="188.5" font-family="Liberation Sans,sans-serif" font-size="13.5" fill="#e51616" text-anchor="start" textLength="140.3" lengthAdjust="spacingAndGlyphs">Current Profit = -3.83000</text><text x="976.5" y="108.0" font-family="Liberation Sans,sans-serif" font-size="9" fill="#fff" text-anchor="start" textLength="41.9" lengthAdjust="spacingAndGlyphs">113094.80</text><text x="976.5" y="141.0" font-family="Liberation Sans,sans-serif" font-size="9" fill="#fff" text-anchor="start" textLength="41.9" lengthAdjust="spacingAndGlyphs">110823.60</text><text x="976.5" y="174.0" font-family="Liberation Sans,sans-serif" font-size="9" fill="#fff" text-anchor="start" textLength="41.9" lengthAdjust="spacingAndGlyphs">108619.20</text><text x="976.5" y="207.0" font-family="Liberation Sans,sans-serif" font-size="9" fill="#fff" text-anchor="start" textLength="41.9" lengthAdjust="spacingAndGlyphs">106414.80</text><text x="976.5" y="240.0" font-family="Liberation Sans,sans-serif" font-size="9" fill="#fff" text-anchor="start" textLength="41.9" lengthAdjust="spacingAndGlyphs">104210.40</text><text x="976.5" y="273.0" font-family="Liberation Sans,sans-serif" font-size="9" fill="#fff" text-anchor="start" textLength="41.9" lengthAdjust="spacingAndGlyphs">101939.20</text><text x="976.5" y="306.0" font-family="Liberation Sans,sans-serif" font-size="9" fill="#fff" text-anchor="start" textLength="37.3" lengthAdjust="spacingAndGlyphs">99734.80</text><text x="976.5" y="339.0" font-family="Liberation Sans,sans-serif" font-size="9" fill="#fff" text-anchor="start" textLength="37.3" lengthAdjust="spacingAndGlyphs">97530.40</text><text x="976.5" y="372.0" font-family="Liberation Sans,sans-serif" font-size="9" fill="#fff" text-anchor="start" textLength="37.3" lengthAdjust="spacingAndGlyphs">95326.00</text><text x="976.5" y="405.0" font-family="Liberation Sans,sans-serif" font-size="9" fill="#fff" text-anchor="start" textLength="37.3" lengthAdjust="spacingAndGlyphs">93121.60</text><rect x="973" y="279" width="50" height="11.500" fill="#fff"/><text x="976.6" y="288.5" font-family="Liberation Sans,sans-serif" font-size="10.5" fill="#000" text-anchor="start" textLength="44.0" lengthAdjust="spacingAndGlyphs">100955.14</text><text x="357.8" y="417.0" font-family="Liberation Sans,sans-serif" font-size="10" fill="#fff" text-anchor="start" textLength="49.5" lengthAdjust="spacingAndGlyphs">20 Jun 2025</text><text x="421.8" y="417.0" font-family="Liberation Sans,sans-serif" font-size="10" fill="#fff" text-anchor="start" textLength="52.7" lengthAdjust="spacingAndGlyphs">20 Jun 16:00</text><text x="485.8" y="417.0" font-family="Liberation Sans,sans-serif" font-size="10" fill="#fff" text-anchor="start" textLength="52.7" lengthAdjust="spacingAndGlyphs">21 Jun 00:00</text><text x="549.8" y="417.0" font-family="Liberation Sans,sans-serif" font-size="10" fill="#fff" text-anchor="start" textLength="52.7" lengthAdjust="spacingAndGlyphs">21 Jun 08:00</text><text x="613.8" y="417.0" font-family="Liberation Sans,sans-serif" font-size="10" fill="#fff" text-anchor="start" textLength="52.7" lengthAdjust="spacingAndGlyphs">21 Jun 22:00</text><text x="677.8" y="417.0" font-family="Liberation Sans,sans-serif" font-size="10" fill="#fff" text-anchor="start" textLength="52.7" lengthAdjust="spacingAndGlyphs">22 Jun 07:00</text><text x="741.8" y="417.0" font-family="Liberation Sans,sans-serif" font-size="10" fill="#fff" text-anchor="start" textLength="52.7" lengthAdjust="spacingAndGlyphs">22 Jun 15:00</text><text x="805.8" y="417.0" font-family="Liberation Sans,sans-serif" font-size="10" fill="#fff" text-anchor="start" textLength="52.7" lengthAdjust="spacingAndGlyphs">22 Jun 23:00</text></svg>
<div class="r" style="left:356px;top:425px;width:667px;height:2px;background:#fff;"></div>
<div class="r" style="left:356px;top:427px;width:667px;height:1px;background:#000;"></div>
<div class="r" style="left:449px;top:427px;width:127px;height:19px;background:#fff;box-shadow:inset 1px 0 0 #000,inset -1px -1px 0 #000,1px 1px 0 #404040;"></div>
<span class="t" style="top:431.00px;font:12px/1 'Liberation Sans',sans-serif;color:#808080;left:372.00px;transform:scaleX(0.9504);">BITCOIN,H1</span>
<span class="t" style="top:431.00px;font:12px/1 'Liberation Sans',sans-serif;color:#000;left:458.80px;transform:scaleX(0.9575);">BITCOIN,H1 (visual)</span>
<svg class="r" style="left:995px;top:433px" width="26" height="7"><path d="M4 0L0.500 3.500L4 7ZM20 0L23.500 3.500L20 7Z" fill="#a0a0a0"/></svg>
<div class="r" style="left:8px;top:447px;width:1015px;height:1px;background:#fff;"></div>
<div class="r" style="left:9px;top:450px;width:13px;height:217px;background:#f0f0f0;"></div>
<div class="r" style="left:9px;top:465px;width:13px;height:202px;background:linear-gradient(#dae6f2,#c6d5e6 50%,#b4c6dc);"></div>
<svg class="r" style="left:12px;top:454px" width="7" height="6"><path d="M0.700 0.500L6 5M6 0.500L0.700 5" stroke="#000" stroke-width="1.700"/></svg>
<span class="t" style="left:11.500px;top:666px;font:11px/1 'Liberation Sans',sans-serif;color:#566a84;transform-origin:0 0;transform:rotate(-90deg) scaleX(1.02);">Тестер</span>
<svg class="r" style="left:22px;top:450px" width="1001" height="196" viewBox="22 450 1001 196"><rect x="23" y="451" width="1000" height="1" fill="#a0a0a0"/><rect x="24" y="452" width="999" height="194" fill="#fff"/><rect x="23" y="451" width="1" height="195" fill="#a0a0a0"/><path d="M60.5 457V594M92.5 457V594M124.5 457V594M156.5 457V594M188.5 457V594M220.5 457V594M252.5 457V594M284.5 457V594M316.5 457V594M348.5 457V594M380.5 457V594M412.5 457V594M444.5 457V594M476.5 457V594M508.5 457V594M540.5 457V594M572.5 457V594M604.5 457V594M636.5 457V594M668.5 457V594M700.5 457V594M732.5 457V594M764.5 457V594M796.5 457V594M828.5 457V594M860.5 457V594M892.5 457V594M924.5 457V594M956.5 457V594M29 465.5H979M29 497.5H979M29 529.5H979M29 561.5H979" stroke="#c8c8c8" stroke-width="1" stroke-dasharray="3 3" fill="none"/><polyline points="28.6,584.9 32.5,583.5 36.4,581.9 40.3,581.6 43.3,581.4 46.4,580.4 49.5,579.6 52.5,579.0 55.5,578.5 58.6,577.5 62.2,578.8 65.9,579.3 69.5,580.1 73.2,581.3 76.4,583.7 79.6,583.6 82.8,584.9 86.0,585.3 89.7,585.6 93.3,586.6 97.0,587.0 100.7,585.7 101.8,576.8 105.8,575.7 109.8,573.2 113.5,573.0 117.1,572.9 120.8,572.1 123.8,573.1 126.9,572.0 129.9,571.4 133.0,571.7 136.0,573.7 139.1,572.8 141.0,564.0 144.2,563.4 147.4,562.7 150.6,559.7 153.8,562.2 157.5,559.2 161.2,558.9 164.8,561.4 168.0,558.0 171.2,560.8 174.4,559.7 177.6,559.1 179.4,557.8 182.4,556.8 185.5,555.2 188.6,554.4 191.6,555.3 194.6,554.4 197.7,553.9 200.9,554.1 204.1,555.9 207.3,555.5 210.5,556.0 213.6,555.5 216.6,554.5 219.7,554.1 223.3,554.2 227.0,553.0 230.2,554.6 233.4,554.1 236.6,556.4 239.8,557.6 243.5,557.7 247.1,556.8 250.8,556.7 254.5,558.0 256.3,553.0 260.0,552.4 263.6,549.8 267.3,549.9 271.0,548.3 274.6,547.6 278.3,546.2 282.0,544.9 285.6,544.6 288.7,545.1 291.7,545.1 294.8,543.9 297.8,544.7 300.8,543.7 303.9,544.5 307.6,545.0 311.2,545.5 314.9,546.7 318.6,544.2 321.7,547.8 324.7,549.0 327.8,550.0 330.8,550.7 333.8,550.9 336.9,551.9 340.5,552.4 344.2,553.0 347.9,553.9 351.5,553.8 355.4,553.6 359.2,554.0 362.9,555.5 366.5,557.8 369.6,556.9 372.7,556.7 377.5,545.7 381.1,542.6 384.8,540.9 388.1,539.2 391.4,539.7 394.7,539.4 398.0,538.2 401.3,536.7 404.4,536.8 407.6,535.6 410.7,535.5 413.8,536.5 416.9,535.1 420.1,535.1 423.2,534.7 426.9,534.3 430.5,532.5 434.2,531.3 437.9,531.0 440.9,532.6 444.0,532.2 447.0,534.0 452.5,528.1 456.2,527.7 459.9,526.1 463.5,526.6 467.2,525.6 470.8,526.6 476.3,522.2 479.7,521.7 483.0,520.2 486.4,518.1 489.8,518.0 493.1,518.9 496.5,517.5 500.1,516.1 503.8,515.1 507.4,513.8 510.5,513.3 513.5,512.7 516.6,512.2 519.7,511.0 522.7,511.9 525.8,510.1 529.4,511.0 533.1,510.5 536.8,510.9 540.4,510.9 543.8,509.7 547.1,508.3 550.5,507.0 553.8,505.7 557.1,505.0 560.5,503.0 563.8,503.4 567.1,502.8 570.4,500.8 573.7,500.8 577.0,501.4 580.0,500.3 583.1,502.8 586.1,503.3 589.2,503.9 592.2,504.3 595.3,504.3 599.0,503.5 602.6,501.1 606.3,500.7 610.0,501.0 613.6,500.5 617.3,498.4 621.0,499.2 624.6,500.0 628.3,500.0 632.0,500.7 635.6,502.9 639.3,498.6 642.3,498.2 645.4,496.7 648.5,497.5 651.5,496.5 654.5,495.5 657.6,492.9 660.8,493.6 664.0,492.6 667.2,490.7 670.4,488.9 673.7,488.9 677.0,487.0 680.3,488.1 683.6,487.4 686.9,487.1 690.2,486.0 693.5,480.8 696.7,483.6 700.0,482.7 703.0,481.9 706.0,480.8 709.0,480.0 712.0,479.3 715.1,480.6 718.3,480.3 721.4,480.2 724.5,481.0 727.6,481.0 730.8,480.7 733.9,481.6 737.6,477.2 741.3,476.4 744.9,476.0 748.6,476.0 752.2,478.6 755.9,478.9 759.6,480.8 763.2,481.0 766.6,482.4 769.9,482.8 773.3,482.9 776.6,484.5 780.0,484.4 784.0,484.9 786.0,477.3 789.4,477.4 792.8,476.7 796.2,476.3 799.8,475.5 803.3,475.7 806.9,474.0 810.4,473.5 813.5,476.1 816.5,476.3 819.5,478.2 822.5,479.8 825.6,480.2 828.7,478.8 833.1,480.4 836.8,482.8 840.8,482.4 843.2,477.9 844.9,476.7 846.9,481.4 848.9,482.4 851.4,476.3 853.0,475.5 854.2,477.5 855.0,473.3 858.0,472.8 861.0,471.3 865.1,471.0 869.2,471.3 872.2,473.1 875.3,473.9 878.4,474.6 881.4,475.9 884.4,475.8 885.4,474.7 888.5,473.1 891.5,472.3 894.5,473.9 899.6,474.7 902.6,476.3 905.7,477.5 908.1,472.3 909.1,471.5 910.8,477.3 912.2,478.4 915.8,476.7 919.9,474.7 921.9,475.9 923.9,477.1 925.6,474.7 927.6,477.5 930.0,479.2 932.4,477.1 935.1,477.9 938.1,479.2 942.2,480.4 945.2,482.4 948.3,483.4 952.3,484.4 956.4,484.0 959.4,482.8 962.4,482.4 964.1,479.2 965.5,480.0 967.5,480.4 969.5,475.9 971.6,472.3 972.6,471.3 973.0,472.3 977.7,467.7" fill="none" stroke="#00a000" stroke-width="1.100"/><polyline points="28.6,584.9 32.5,583.5 36.4,583.7 40.3,582.3 43.3,581.9 46.4,580.4 49.5,579.9 52.5,579.0 55.5,578.5 58.6,577.5 62.2,579.1 65.9,579.3 69.5,580.4 73.2,582.3 76.4,583.7 79.6,584.1 82.8,585.4 86.0,586.0 89.7,585.6 93.3,586.6 97.0,587.0 100.7,586.0 101.8,576.8 105.8,575.7 109.8,573.9 113.5,573.0 117.1,573.5 120.8,572.4 123.8,573.1 126.9,572.0 129.9,572.1 133.0,573.0 136.0,573.7 139.1,573.2 141.0,564.0 144.2,563.4 147.4,562.7 150.6,562.5 153.8,562.2 157.5,559.2 161.2,559.6 164.8,561.4 168.0,560.7 171.2,560.8 174.4,560.6 177.6,560.3 179.4,557.8 182.4,556.8 185.5,556.2 188.6,555.6 191.6,555.3 194.6,554.4 197.7,554.1 200.9,554.1 204.1,555.9 207.3,556.1 210.5,556.7 213.6,556.0 216.6,554.5 219.7,554.1 223.3,554.2 227.0,553.0 230.2,554.7 233.4,554.9 236.6,556.4 239.8,557.8 243.5,557.7 247.1,557.4 250.8,556.7 254.5,559.2 256.3,553.0 260.0,552.4 263.6,550.5 267.3,549.9 271.0,548.3 274.6,547.6 278.3,546.2 282.0,545.6 285.6,544.6 288.7,545.1 291.7,545.1 294.8,544.6 297.8,544.7 300.8,543.9 303.9,544.6 307.6,545.0 311.2,546.5 314.9,546.7 318.6,547.5 321.7,547.8 324.7,549.0 327.8,550.0 330.8,550.7 333.8,551.0 336.9,551.9 340.5,552.4 344.2,553.0 347.9,553.9 351.5,554.1 355.4,554.1 359.2,554.1 362.9,555.8 366.5,557.8 369.6,557.2 372.7,556.7 377.5,545.7 381.1,542.6 384.8,540.9 388.1,539.5 391.4,539.7 394.7,539.4 398.0,538.2 401.3,537.3 404.4,536.8 407.6,536.1 410.7,536.2 413.8,536.5 416.9,535.8 420.1,535.1 423.2,534.7 426.9,534.3 430.5,532.5 434.2,531.9 437.9,531.0 440.9,532.6 444.0,533.1 447.0,534.0 452.5,529.2 456.2,528.2 459.9,527.1 463.5,526.6 467.2,525.6 470.8,527.4 476.3,522.6 479.7,522.4 483.0,520.2 486.4,520.4 489.8,519.6 493.1,518.9 496.5,517.5 500.1,516.6 503.8,515.5 507.4,513.8 510.5,513.3 513.5,512.9 516.6,512.2 519.7,511.2 522.7,511.9 525.8,510.9 529.4,511.0 533.1,510.5 536.8,510.9 540.4,510.9 543.8,509.7 547.1,508.3 550.5,507.0 553.8,506.1 557.1,505.0 560.5,503.6 563.8,503.4 567.1,502.8 570.4,501.9 573.7,501.8 577.0,501.8 580.0,501.8 583.1,502.8 586.1,503.6 589.2,503.9 592.2,504.3 595.3,504.3 599.0,503.5 602.6,501.6 606.3,500.7 610.0,501.0 613.6,500.5 617.3,499.5 621.0,499.9 624.6,500.0 628.3,500.7 632.0,502.5 635.6,502.9 639.3,499.2 642.3,498.2 645.4,497.4 648.5,497.5 651.5,496.5 654.5,495.5 657.6,495.5 660.8,493.6 664.0,492.6 667.2,490.7 670.4,489.7 673.7,488.9 677.0,489.0 680.3,488.1 683.6,487.4 686.9,487.1 690.2,486.0 693.5,484.2 696.7,483.6 700.0,482.7 703.0,481.9 706.0,480.8 709.0,480.0 712.0,479.8 715.1,480.6 718.3,480.3 721.4,480.2 724.5,481.0 727.6,481.5 730.8,480.7 733.9,481.6 737.6,477.2 741.3,476.5 744.9,476.7 748.6,477.2 752.2,478.6 755.9,478.9 759.6,480.8 763.2,481.6 766.6,482.4 769.9,482.8 773.3,482.9 776.6,484.5 780.0,484.4 784.0,485.4 786.0,477.3 789.4,477.4 792.8,476.7 796.2,476.3 799.8,475.5 803.3,475.7 806.9,475.0 810.4,474.7 813.5,476.1 816.5,477.3 819.5,478.2 822.5,479.8 825.6,480.2 828.6,482.0 832.0,483.1 835.4,485.3 838.8,486.0 842.8,486.8 846.9,486.5 850.5,485.7 854.0,485.4 855.0,473.3 858.0,472.8 861.0,471.3 865.1,471.0 869.2,471.3 872.2,473.1 875.3,473.9 878.4,474.6 881.4,475.9 884.4,476.1 887.5,476.2 890.5,477.9 893.5,477.9 897.5,478.5 901.6,480.4 905.7,482.3 909.7,483.4 912.8,484.5 915.8,484.4 919.9,481.4 924.0,481.8 928.0,482.0 931.0,482.0 934.0,483.5 937.1,484.2 940.1,484.0 944.2,486.3 948.3,488.1 951.7,488.2 955.0,488.2 958.4,488.5 963.5,489.5 966.5,486.9 972.2,486.9 973.0,472.3 977.7,468.6" fill="none" stroke="#0000a8" stroke-width="2.200" stroke-linejoin="round"/><rect x="28.500" y="456.500" width="951" height="138" fill="none" stroke="#000"/><rect x="28.500" y="596.500" width="951" height="32" fill="#fff" stroke="#000"/><rect x="29" y="614" width="949" height="13.500" fill="#00a800"/><path d="M30 600h3v14h-3zM36 600h4v14h-4zM44 600h1v14h-1zM49 600h7v14h-7zM60 600h3v14h-3zM66 600h1v14h-1zM68 600h2v14h-2zM71 600h7v14h-7zM82 600h3v14h-3zM87 600h2v14h-2zM91 600h3v14h-3zM95 600h3v14h-3zM100 600h3v14h-3zM104 600h5v14h-5zM110 600h2v14h-2zM113 600h7v14h-7zM121 600h2v14h-2zM124 600h1v14h-1zM126 600h3v14h-3zM130 600h2v14h-2zM133 600h4v14h-4zM138 600h3v14h-3zM142 600h3v14h-3zM147 600h3v14h-3zM151 600h4v14h-4zM157 600h2v14h-2zM160 600h3v14h-3zM164 600h4v14h-4zM169 600h1v14h-1zM172 600h4v14h-4zM177 600h3v14h-3zM181 600h3v14h-3zM186 600h4v14h-4zM191 600h7v14h-7zM200 600h2v14h-2zM203 600h3v14h-3zM207 600h4v14h-4zM215 600h5v14h-5zM221 600h5v14h-5zM227 600h5v14h-5zM234 600h1v14h-1zM237 600h1v14h-1zM241 600h2v14h-2zM245 600h3v14h-3zM249 600h3v14h-3zM256 600h7v14h-7zM264 600h4v14h-4zM270 600h3v14h-3zM277 600h7v14h-7zM285 600h4v14h-4zM293 600h3v14h-3zM297 600h5v14h-5zM303 600h3v14h-3zM307 600h4v14h-4zM312 600h4v14h-4zM317 600h2v14h-2zM320 600h4v14h-4zM325 600h2v14h-2zM331 600h2v14h-2zM336 600h2v14h-2zM341 600h3v14h-3zM346 600h2v14h-2zM351 600h1v14h-1zM353 600h5v14h-5zM359 600h3v14h-3zM365 600h4v14h-4zM373 600h3v14h-3zM378 600h5v14h-5zM384 600h1v14h-1zM388 600h1v14h-1zM393 600h7v14h-7zM401 600h3v14h-3zM405 600h2v14h-2zM410 600h5v14h-5zM416 600h2v14h-2zM420 600h4v14h-4zM425 600h1v14h-1zM430 600h5v14h-5zM436 600h2v14h-2zM440 600h2v14h-2zM444 600h7v14h-7zM453 600h4v14h-4zM459 600h3v14h-3zM463 600h7v14h-7zM472 600h2v14h-2zM475 600h5v14h-5zM484 600h2v14h-2zM489 600h7v14h-7zM500 600h4v14h-4zM505 600h2v14h-2zM509 600h3v14h-3zM514 600h4v14h-4zM519 600h4v14h-4zM526 600h1v14h-1zM531 600h3v14h-3zM535 600h3v14h-3zM542 600h7v14h-7zM550 600h3v14h-3zM554 600h2v14h-2zM558 600h1v14h-1zM561 600h3v14h-3zM565 600h3v14h-3zM570 600h3v14h-3zM577 600h4v14h-4zM582 600h3v14h-3zM588 600h4v14h-4zM595 600h5v14h-5zM601 600h2v14h-2zM607 600h7v14h-7zM615 600h4v14h-4zM621 600h2v14h-2zM625 600h2v14h-2zM628 600h4v14h-4zM636 600h7v14h-7zM644 600h2v14h-2zM649 600h5v14h-5zM655 600h5v14h-5zM661 600h3v14h-3zM667 600h1v14h-1zM669 600h2v14h-2zM673 600h7v14h-7zM682 600h2v14h-2zM685 600h2v14h-2zM690 600h1v14h-1zM693 600h3v14h-3zM697 600h1v14h-1zM699 600h2v14h-2zM702 600h2v14h-2zM706 600h3v14h-3zM711 600h1v14h-1zM714 600h7v14h-7zM722 600h5v14h-5zM730 600h2v14h-2zM734 600h3v14h-3zM738 600h4v14h-4zM743 600h4v14h-4zM749 600h3v14h-3zM756 600h5v14h-5zM765 600h2v14h-2zM770 600h4v14h-4zM775 600h3v14h-3zM779 600h3v14h-3zM784 600h4v14h-4zM790 600h3v14h-3zM794 600h2v14h-2zM798 600h5v14h-5zM807 600h4v14h-4zM813 600h2v14h-2zM816 600h5v14h-5zM823 600h7v14h-7zM831 600h2v14h-2zM835 600h2v14h-2zM838 600h1v14h-1zM841 600h2v14h-2zM844 600h2v14h-2zM847 600h5v14h-5zM854 600h5v14h-5zM860 600h7v14h-7zM868 600h7v14h-7zM878 600h5v14h-5zM885 600h2v14h-2zM889 600h3v14h-3zM895 600h3v14h-3zM900 600h3v14h-3zM905 600h1v14h-1zM907 600h3v14h-3zM912 600h3v14h-3zM916 600h7v14h-7zM924 600h2v14h-2zM929 600h7v14h-7zM937 600h3v14h-3zM941 600h2v14h-2zM947 600h5v14h-5zM953 600h7v14h-7zM962 600h3v14h-3zM966 600h7v14h-7zM977 600h1v14h-1z" fill="#00a800"/><rect x="29" y="597" width="32.500" height="11.500" fill="#fff"/><text x="31.5" y="608.0" font-family="Liberation Sans,sans-serif" font-size="10.5" fill="#000" text-anchor="start" textLength="29.0" lengthAdjust="spacingAndGlyphs">Объем</text><text x="983.8" y="469.0" font-family="Liberation Sans,sans-serif" font-size="9.5" fill="#000" text-anchor="start" textLength="19.3" lengthAdjust="spacingAndGlyphs">6196</text><text x="983.8" y="501.0" font-family="Liberation Sans,sans-serif" font-size="9.5" fill="#000" text-anchor="start" textLength="19.3" lengthAdjust="spacingAndGlyphs">4790</text><text x="983.8" y="533.0" font-family="Liberation Sans,sans-serif" font-size="9.5" fill="#000" text-anchor="start" textLength="19.3" lengthAdjust="spacingAndGlyphs">3384</text><text x="983.8" y="565.0" font-family="Liberation Sans,sans-serif" font-size="9.5" fill="#000" text-anchor="start" textLength="19.3" lengthAdjust="spacingAndGlyphs">1978</text><text x="983.8" y="598.0" font-family="Liberation Sans,sans-serif" font-size="9.5" fill="#000" text-anchor="start" textLength="14.5" lengthAdjust="spacingAndGlyphs">571</text><text x="29.5" y="638.7" font-family="Liberation Sans,sans-serif" font-size="9.5" fill="#000" text-anchor="start" textLength="4.9" lengthAdjust="spacingAndGlyphs">0</text><text x="59.3" y="638.7" font-family="Liberation Sans,sans-serif" font-size="9.5" fill="#000" text-anchor="end" textLength="14.7" lengthAdjust="spacingAndGlyphs">227</text><text x="91.3" y="638.7" font-family="Liberation Sans,sans-serif" font-size="9.5" fill="#000" text-anchor="end" textLength="14.7" lengthAdjust="spacingAndGlyphs">430</text><text x="123.3" y="638.7" font-family="Liberation Sans,sans-serif" font-size="9.5" fill="#000" text-anchor="end" textLength="14.7" lengthAdjust="spacingAndGlyphs">632</text><text x="155.3" y="638.7" font-family="Liberation Sans,sans-serif" font-size="9.5" fill="#000" text-anchor="end" textLength="14.7" lengthAdjust="spacingAndGlyphs">834</text><text x="187.3" y="638.7" font-family="Liberation Sans,sans-serif" font-size="9.5" fill="#000" text-anchor="end" textLength="19.6" lengthAdjust="spacingAndGlyphs">1036</text><text x="219.3" y="638.7" font-family="Liberation Sans,sans-serif" font-size="9.5" fill="#000" text-anchor="end" textLength="19.6" lengthAdjust="spacingAndGlyphs">1238</text><text x="251.3" y="638.7" font-family="Liberation Sans,sans-serif" font-size="9.5" fill="#000" text-anchor="end" textLength="19.6" lengthAdjust="spacingAndGlyphs">1441</text><text x="283.3" y="638.7" font-family="Liberation Sans,sans-serif" font-size="9.5" fill="#000" text-anchor="end" textLength="19.6" lengthAdjust="spacingAndGlyphs">1643</text><text x="315.3" y="638.7" font-family="Liberation Sans,sans-serif" font-size="9.5" fill="#000" text-anchor="end" textLength="19.6" lengthAdjust="spacingAndGlyphs">1845</text><text x="347.3" y="638.7" font-family="Liberation Sans,sans-serif" font-size="9.5" fill="#000" text-anchor="end" textLength="19.6" lengthAdjust="spacingAndGlyphs">2047</text><text x="379.3" y="638.7" font-family="Liberation Sans,sans-serif" font-size="9.5" fill="#000" text-anchor="end" textLength="19.6" lengthAdjust="spacingAndGlyphs">2249</text><text x="411.3" y="638.7" font-family="Liberation Sans,sans-serif" font-size="9.5" fill="#000" text-anchor="end" textLength="19.6" lengthAdjust="spacingAndGlyphs">2452</text><text x="443.3" y="638.7" font-family="Liberation Sans,sans-serif" font-size="9.5" fill="#000" text-anchor="end" textLength="19.6" lengthAdjust="spacingAndGlyphs">2654</text><text x="475.3" y="638.7" font-family="Liberation Sans,sans-serif" font-size="9.5" fill="#000" text-anchor="end" textLength="19.6" lengthAdjust="spacingAndGlyphs">2856</text><text x="507.3" y="638.7" font-family="Liberation Sans,sans-serif" font-size="9.5" fill="#000" text-anchor="end" textLength="19.6" lengthAdjust="spacingAndGlyphs">3058</text><text x="539.3" y="638.7" font-family="Liberation Sans,sans-serif" font-size="9.5" fill="#000" text-anchor="end" textLength="19.6" lengthAdjust="spacingAndGlyphs">3260</text><text x="571.3" y="638.7" font-family="Liberation Sans,sans-serif" font-size="9.5" fill="#000" text-anchor="end" textLength="19.6" lengthAdjust="spacingAndGlyphs">3463</text><text x="603.3" y="638.7" font-family="Liberation Sans,sans-serif" font-size="9.5" fill="#000" text-anchor="end" textLength="19.6" lengthAdjust="spacingAndGlyphs">3665</text><text x="635.3" y="638.7" font-family="Liberation Sans,sans-serif" font-size="9.5" fill="#000" text-anchor="end" textLength="19.6" lengthAdjust="spacingAndGlyphs">3867</text><text x="667.3" y="638.7" font-family="Liberation Sans,sans-serif" font-size="9.5" fill="#000" text-anchor="end" textLength="19.6" lengthAdjust="spacingAndGlyphs">4069</text><text x="699.3" y="638.7" font-family="Liberation Sans,sans-serif" font-size="9.5" fill="#000" text-anchor="end" textLength="19.6" lengthAdjust="spacingAndGlyphs">4271</text><text x="731.3" y="638.7" font-family="Liberation Sans,sans-serif" font-size="9.5" fill="#000" text-anchor="end" textLength="19.6" lengthAdjust="spacingAndGlyphs">4474</text><text x="763.3" y="638.7" font-family="Liberation Sans,sans-serif" font-size="9.5" fill="#000" text-anchor="end" textLength="19.6" lengthAdjust="spacingAndGlyphs">4676</text><text x="795.3" y="638.7" font-family="Liberation Sans,sans-serif" font-size="9.5" fill="#000" text-anchor="end" textLength="19.6" lengthAdjust="spacingAndGlyphs">4878</text><text x="827.3" y="638.7" font-family="Liberation Sans,sans-serif" font-size="9.5" fill="#000" text-anchor="end" textLength="19.6" lengthAdjust="spacingAndGlyphs">5080</text><text x="859.3" y="638.7" font-family="Liberation Sans,sans-serif" font-size="9.5" fill="#000" text-anchor="end" textLength="19.6" lengthAdjust="spacingAndGlyphs">5282</text><text x="891.3" y="638.7" font-family="Liberation Sans,sans-serif" font-size="9.5" fill="#000" text-anchor="end" textLength="19.6" lengthAdjust="spacingAndGlyphs">5485</text><text x="923.3" y="638.7" font-family="Liberation Sans,sans-serif" font-size="9.5" fill="#000" text-anchor="end" textLength="19.6" lengthAdjust="spacingAndGlyphs">5687</text><text x="955.3" y="638.7" font-family="Liberation Sans,sans-serif" font-size="9.5" fill="#000" text-anchor="end" textLength="19.6" lengthAdjust="spacingAndGlyphs">5889</text><path d="M979 465.5H981.500M979 497.5H981.500M979 529.5H981.500M979 561.5H981.500M979 594.5H981.500M60.5 628V630.500M92.5 628V630.500M124.5 628V630.500M156.5 628V630.500M188.5 628V630.500M220.5 628V630.500M252.5 628V630.500M284.5 628V630.500M316.5 628V630.500M348.5 628V630.500M380.5 628V630.500M412.5 628V630.500M444.5 628V630.500M476.5 628V630.500M508.5 628V630.500M540.5 628V630.500M572.5 628V630.500M604.5 628V630.500M636.5 628V630.500M668.5 628V630.500M700.5 628V630.500M732.5 628V630.500M764.5 628V630.500M796.5 628V630.500M828.5 628V630.500M860.5 628V630.500M892.5 628V630.500M924.5 628V630.500M956.5 628V630.500" stroke="#000" stroke-width="1"/><text x="31.6" y="467.7" font-family="Liberation Sans,sans-serif" font-size="10" fill="#0000c0" text-anchor="start" textLength="28.4" lengthAdjust="spacingAndGlyphs">Баланс</text><text x="64.0" y="467.7" font-family="Liberation Sans,sans-serif" font-size="10" fill="#000" text-anchor="start">/</text><text x="69.8" y="467.7" font-family="Liberation Sans,sans-serif" font-size="10" fill="#00a000" text-anchor="start" textLength="40.9" lengthAdjust="spacingAndGlyphs">Средства</text></svg>
<div class="r" style="left:23px;top:645px;width:1000px;height:1px;background:#000;"></div>
<div class="r" style="left:23px;top:646px;width:1px;height:21px;background:#a0a0a0;"></div>
<div class="r" style="left:188px;top:645px;width:61px;height:20px;background:#fff;box-shadow:inset 1px 0 0 #000,inset -1px -1px 0 #000,1px 1px 0 #808080;"></div>
<span class="t" style="top:649.00px;font:12.5px/1 'Liberation Sans',sans-serif;color:#808080;left:36.60px;transform:scaleX(0.9561);">Настройки</span>
<span class="t" style="top:649.00px;font:12.5px/1 'Liberation Sans',sans-serif;color:#808080;left:116.40px;transform:scaleX(0.9297);">Результаты</span>
<span class="t" style="top:649.00px;font:12.5px/1 'Liberation Sans',sans-serif;color:#000;left:197.70px;transform:scaleX(0.9600);">График</span>
<span class="t" style="top:649.00px;font:12.5px/1 'Liberation Sans',sans-serif;color:#808080;left:259.00px;transform:scaleX(0.9351);">Отчет</span>
<span class="t" style="top:649.00px;font:12.5px/1 'Liberation Sans',sans-serif;color:#808080;left:310.50px;transform:scaleX(0.9648);">Журнал</span>
<div class="r" style="left:106px;top:650px;width:1px;height:13px;background:#808080;"></div>
<div class="r" style="left:301px;top:650px;width:1px;height:13px;background:#808080;"></div>
<div class="r" style="left:365px;top:650px;width:1px;height:13px;background:#808080;"></div>
<div class="r" style="left:8px;top:667px;width:1015px;height:1px;background:#fff;"></div>
<div class="r" style="left:8px;top:670px;width:1015px;height:1px;background:#a0a0a0;"></div>
<div class="r" style="left:8px;top:671px;width:1015px;height:1px;background:#fff;"></div>
<span class="t" style="top:678.00px;font:12.5px/1 'Liberation Sans',sans-serif;color:#000;left:9.90px;transform:scaleX(0.9415);">Для вызова справки нажмите F1</span>
<div class="r" style="left:315px;top:675px;width:1px;height:16px;background:#a0a0a0;"></div>
<div class="r" style="left:316px;top:675px;width:1px;height:16px;background:#fff;"></div>
<div class="r" style="left:431px;top:675px;width:1px;height:16px;background:#a0a0a0;"></div>
<div class="r" style="left:432px;top:675px;width:1px;height:16px;background:#fff;"></div>
<div class="r" style="left:533px;top:675px;width:1px;height:16px;background:#a0a0a0;"></div>
<div class="r" style="left:534px;top:675px;width:1px;height:16px;background:#fff;"></div>
<div class="r" style="left:604px;top:675px;width:1px;height:16px;background:#a0a0a0;"></div>
<div class="r" style="left:605px;top:675px;width:1px;height:16px;background:#fff;"></div>
<div class="r" style="left:675px;top:675px;width:1px;height:16px;background:#a0a0a0;"></div>
<div class="r" style="left:676px;top:675px;width:1px;height:16px;background:#fff;"></div>
<div class="r" style="left:743px;top:675px;width:1px;height:16px;background:#a0a0a0;"></div>
<div class="r" style="left:744px;top:675px;width:1px;height:16px;background:#fff;"></div>
<div class="r" style="left:814px;top:675px;width:1px;height:16px;background:#a0a0a0;"></div>
<div class="r" style="left:815px;top:675px;width:1px;height:16px;background:#fff;"></div>
<div class="r" style="left:879px;top:675px;width:1px;height:16px;background:#a0a0a0;"></div>
<div class="r" style="left:880px;top:675px;width:1px;height:16px;background:#fff;"></div>
<div class="r" style="left:437.9px;top:674px;width:90px;height:19px;overflow:hidden"><span class="t" style="top:4.00px;font:12px/1 'Liberation Sans',sans-serif;color:#000;left:0.00px;transform:scaleX(0.8821);">2025.06.21 01:00</span></div>
<div class="r" style="left:539.7px;top:674px;width:63px;height:19px;overflow:hidden"><span class="t" style="top:4.00px;font:12px/1 'Liberation Sans',sans-serif;color:#000;left:0.00px;transform:scaleX(0.8938);">O: 103492.38</span></div>
<div class="r" style="left:610.7px;top:674px;width:63px;height:19px;overflow:hidden"><span class="t" style="top:4.00px;font:12px/1 'Liberation Sans',sans-serif;color:#000;left:0.00px;transform:scaleX(0.9021);">H: 103498.88</span></div>
<div class="r" style="left:681.4px;top:674px;width:60.5px;height:19px;overflow:hidden"><span class="t" style="top:4.00px;font:12px/1 'Liberation Sans',sans-serif;color:#000;left:0.00px;transform:scaleX(0.8921);">L: 102938.12</span></div>
<div class="r" style="left:749.7px;top:674px;width:63.5px;height:19px;overflow:hidden"><span class="t" style="top:4.00px;font:12px/1 'Liberation Sans',sans-serif;color:#000;left:0.00px;transform:scaleX(0.9091);">C: 103057.55</span></div>
<div class="r" style="left:819px;top:674px;width:50px;height:19px;overflow:hidden"><span class="t" style="top:4.00px;font:12px/1 'Liberation Sans',sans-serif;color:#000;left:0.00px;transform:scaleX(0.8749);">V: 4028</span></div>
<div class="r" style="left:913.4px;top:674px;width:60px;height:19px;overflow:hidden"><span class="t" style="top:4.00px;font:12px/1 'Liberation Sans',sans-serif;color:#000;left:0.00px;transform:scaleX(0.9373);">9339/4 kb</span></div>
<svg class="r" style="left:885px;top:677px" width="24" height="12" shape-rendering="crispEdges"><rect x="0" y="0" width="2" height="9" fill="#5c8a1c"/><rect x="0" y="9" width="2" height="3" fill="#114a7c"/><rect x="3" y="0" width="2" height="8" fill="#5c8a1c"/><rect x="3" y="8" width="2" height="4" fill="#114a7c"/><rect x="6" y="0" width="2" height="7" fill="#5c8a1c"/><rect x="6" y="7" width="2" height="5" fill="#114a7c"/><rect x="9" y="0" width="2" height="6" fill="#5c8a1c"/><rect x="9" y="6" width="2" height="6" fill="#114a7c"/><rect x="12" y="0" width="2" height="5" fill="#5c8a1c"/><rect x="12" y="5" width="2" height="7" fill="#114a7c"/><rect x="15" y="0" width="2" height="4" fill="#5c8a1c"/><rect x="15" y="4" width="2" height="8" fill="#114a7c"/><rect x="18" y="0" width="2" height="3" fill="#5c8a1c"/><rect x="18" y="3" width="2" height="9" fill="#114a7c"/><rect x="21" y="0" width="2" height="2" fill="#5c8a1c"/><rect x="21" y="2" width="2" height="10" fill="#114a7c"/></svg>
<svg class="r" style="left:1010px;top:681px" width="13" height="13"><path d="M12.500 1L1 12.500M12.500 5L5 12.500M12.500 9L9 12.500" stroke="#a0a0a0" stroke-width="1.200"/></svg>
</body></html>
